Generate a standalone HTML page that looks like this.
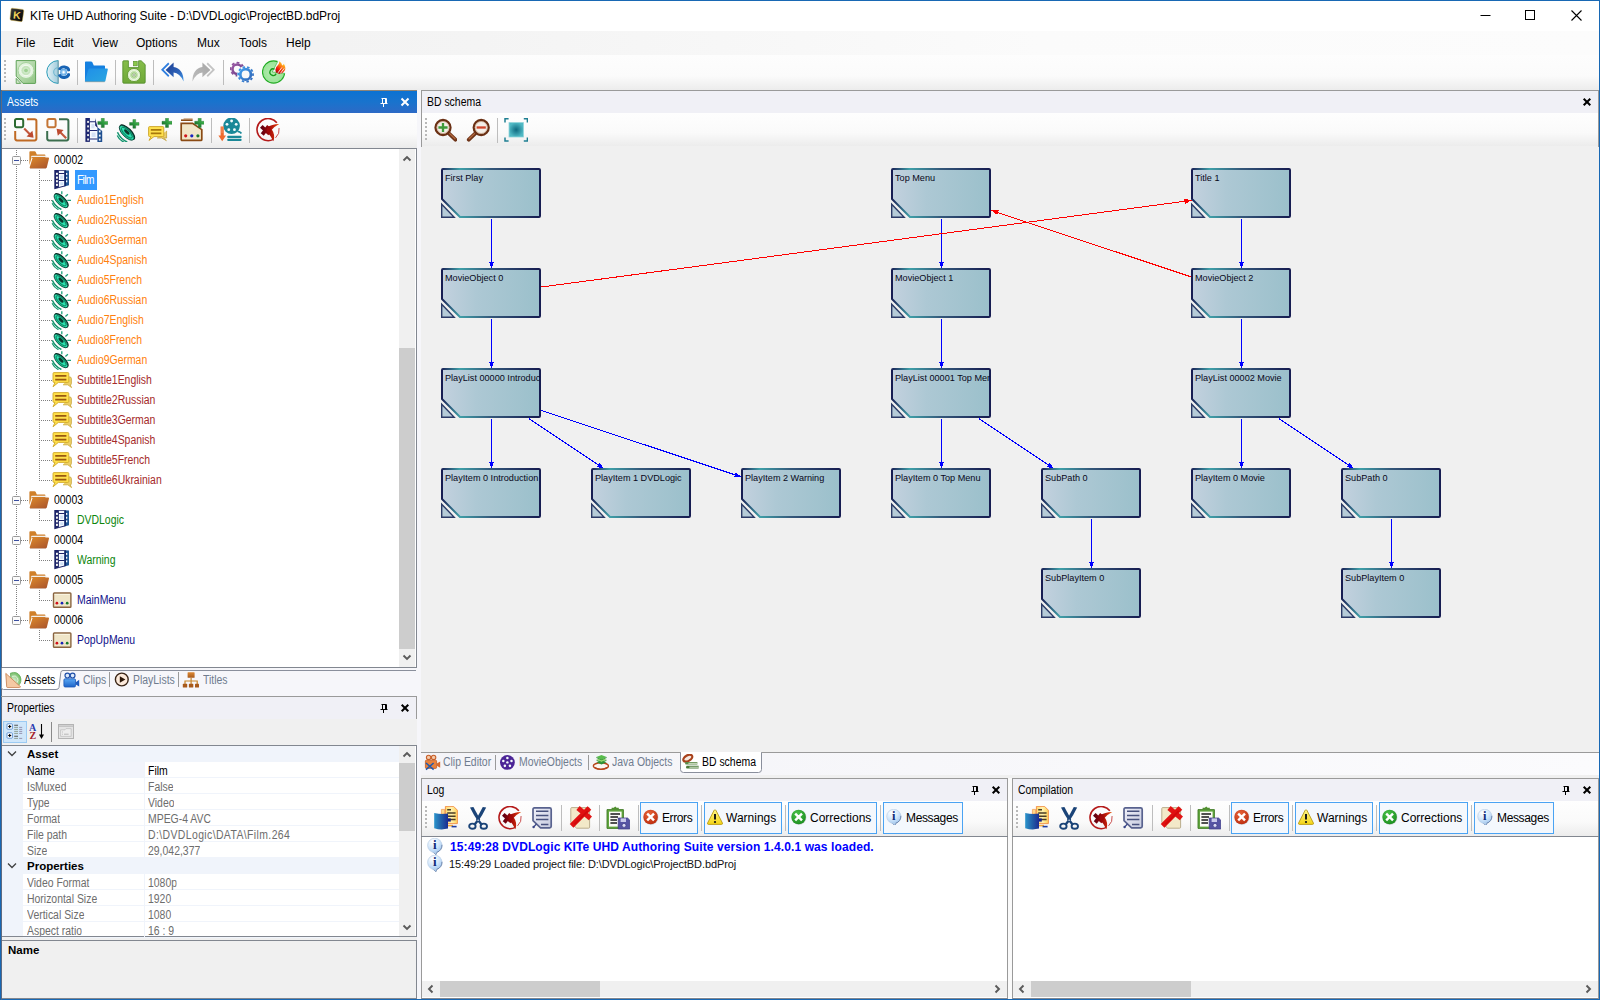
<!DOCTYPE html><html><head><meta charset="utf-8"><title>KITe UHD Authoring Suite</title><style>
*{margin:0;padding:0;box-sizing:border-box}
html,body{width:1600px;height:1000px;overflow:hidden}
body{position:relative;background:#f0f0f0;font-family:"Liberation Sans",sans-serif;font-size:11px;color:#000}
div,span.t,span.s,span.b,svg.i{position:absolute}
span.t,span.s,span.b{white-space:nowrap;line-height:1}
span.t{font-size:12px;transform:scaleX(.87);transform-origin:0 0}
span.s{font-size:12px}
span.b{font-weight:bold}
.sep{width:1px;background:#bdbdbd}
.grip{width:2px;background:repeating-linear-gradient(to bottom,#b8b8b8 0 2px,transparent 2px 4px)}
</style></head><body>
<div style="left:0px;top:0px;width:1600px;height:1000px;background:#1868b4"></div>
<div style="left:1px;top:1px;width:1598px;height:998px;background:#f0f0f0"></div>
<div style="left:1px;top:1px;width:1598px;height:30px;background:#fff"></div>
<svg class="i" style="left:9px;top:7px" width="16" height="16" viewBox="0 0 16 16"><defs><linearGradient id="apg" x1="0" y1="0" x2="1" y2="1"><stop offset="0" stop-color="#3a3a3a"/><stop offset="1" stop-color="#000"/></linearGradient></defs><path d="M3.2 1.2L13.6 2.4Q15 2.7 14.8 4L13.4 13.4Q13.1 14.8 11.7 14.6L2 13.2Q0.8 12.9 1 11.6L2 2.4Q2.2 1.1 3.2 1.2Z" fill="url(#apg)" stroke="#d9b64a" stroke-width="0.5"/><text x="4.1" y="12" font-family="Liberation Sans,sans-serif" font-weight="bold" font-size="10.5" fill="#f4d35a" transform="rotate(6 8 8)">K</text></svg>
<span class="s" style="left:30px;top:10px;letter-spacing:-0.06px">KITe UHD Authoring Suite - D:\DVDLogic\ProjectBD.bdProj</span>
<svg class="i" style="left:1470px;top:5px" width="125" height="22" viewBox="0 0 125 22"><path d="M10.5 10.5h10" stroke="#000" stroke-width="1" fill="none"/><rect x="55.5" y="5.5" width="9" height="9" stroke="#000" stroke-width="1" fill="none"/><path d="M101.5 5.5l10 10M111.5 5.5l-10 10" stroke="#000" stroke-width="1.1" fill="none"/></svg>
<div style="left:1px;top:31px;width:1598px;height:24px;background:linear-gradient(to right,#f1f1f1,#f4f4f4 30%,#fbfbfb 65%,#fcfcfc)"></div>
<span class="s" style="left:16px;top:37px;">File</span>
<span class="s" style="left:53px;top:37px;">Edit</span>
<span class="s" style="left:92px;top:37px;">View</span>
<span class="s" style="left:136px;top:37px;">Options</span>
<span class="s" style="left:197px;top:37px;">Mux</span>
<span class="s" style="left:239px;top:37px;">Tools</span>
<span class="s" style="left:286px;top:37px;">Help</span>
<div style="left:1px;top:55px;width:1598px;height:35px;background:linear-gradient(#fdfdfd,#fbfbfb 60%,#ececec)"></div>
<div class="grip" style="left:4px;top:60px;width:2px;height:22px;"></div>
<svg class="i" style="left:14px;top:60px" width="24" height="24" viewBox="0 0 24 24"><defs><linearGradient id="npg" x1="0" y1="0" x2="1" y2="1"><stop offset="0" stop-color="#d7ecd0"/><stop offset="1" stop-color="#8fc482"/></linearGradient></defs><path d="M2.2 0.6H21Q21.6 0.6 21.6 1.2V22.8Q21.6 23.4 21 23.4H9L2.2 16.2Z" fill="url(#npg)" stroke="#5fa257" stroke-width="1"/><path d="M2.2 18.4L6.8 23.4H2.2Z" fill="#cfe6c8" stroke="#5fa257" stroke-width="0.9"/><circle cx="12" cy="10.5" r="8" fill="#e4f3df" stroke="#a5d39b" stroke-width="1"/><circle cx="12" cy="10.5" r="5.2" fill="#c5e4bc" stroke="#f4fbf2" stroke-width="1"/><circle cx="12" cy="10.5" r="2.4" fill="#9fd192" stroke="#dff0da" stroke-width="0.8"/></svg>
<svg class="i" style="left:46px;top:60px" width="24" height="24" viewBox="0 0 24 24"><defs><linearGradient id="dbg" x1="0" y1="0" x2="1" y2="0"><stop offset="0" stop-color="#e6f3f7"/><stop offset="1" stop-color="#9fcbdc"/></linearGradient><radialGradient id="dbr"><stop offset="0" stop-color="#e8f6ff"/><stop offset="1" stop-color="#4b9ce0"/></radialGradient></defs><path d="M12.2 0.6A11.4 11.4 0 0 0 12.2 23.4Z" fill="url(#dbg)" stroke="#2b9cb8" stroke-width="1"/><path d="M12.2 0.6V23.4" stroke="#9aa6ac" stroke-width="0.8"/><path d="M12 7.8A4.3 4.3 0 0 0 12 16.4" fill="none" stroke="#6fb6cf" stroke-width="1.1"/><path d="M13.20 9.96A5.3 5.3 0 0 1 23.18 11.10M23.18 13.30A5.3 5.3 0 0 1 13.20 14.44" fill="none" stroke="#1763b4" stroke-width="2.9"/><circle cx="17.6" cy="12.2" r="3.4" fill="url(#dbr)"/><circle cx="17.6" cy="12.2" r="1" fill="#fff"/></svg>
<svg class="i" style="left:84px;top:60px" width="24" height="24" viewBox="0 0 24 24"><defs><linearGradient id="fog" x1="0" y1="0" x2="1" y2="1"><stop offset="0" stop-color="#1f8fe9"/><stop offset="1" stop-color="#2aa6e0"/></linearGradient></defs><path d="M1 2.2Q1 1.4 1.8 1.4H7Q7.8 1.4 8.2 2L9.8 5.4H20.2Q21 5.4 21 6.2V12H6L1.6 21.4L1 20Z" fill="#1580e0"/><path d="M4.4 9.4Q4.6 8.6 5.4 8.6H23Q24 8.6 23.8 9.6L21.4 21Q21.2 21.8 20.4 21.8H1.6Q0.6 21.8 0.9 20.8Z" fill="url(#fog)"/><path d="M1.2 21.8H20.6" stroke="#8a6a4a" stroke-width="0.6" opacity="0.6"/></svg>
<svg class="i" style="left:122px;top:60px" width="24" height="24" viewBox="0 0 24 24"><defs><linearGradient id="svg1" x1="0" y1="0" x2="0" y2="1"><stop offset="0" stop-color="#86bd4a"/><stop offset="1" stop-color="#6ea838"/></linearGradient></defs><path d="M1.6 0.8H6.4V7.6H16.6V0.8H19.2L23.2 4.6V22.2Q23.2 23.2 22.2 23.2H1.6Q0.8 23.2 0.8 22.2V1.6Q0.8 0.8 1.6 0.8Z" fill="url(#svg1)" stroke="#4f8a28" stroke-width="0.8"/><rect x="11.6" y="1.4" width="3.6" height="4.4" fill="#8cc84a" stroke="#5a932c" stroke-width="0.7"/><circle cx="12" cy="15" r="6.6" fill="#dff0d0" stroke="#5a932c" stroke-width="0.8"/><circle cx="12" cy="15" r="4.4" fill="#bfe0a8" stroke="#f2faea" stroke-width="0.8"/><circle cx="12" cy="15" r="2" fill="#f4faef" stroke="#7db05a" stroke-width="0.7"/><circle cx="12" cy="15" r="0.7" fill="#4a5a3a"/></svg>
<svg class="i" style="left:160px;top:60px" width="24" height="24" viewBox="0 0 24 24"><defs><linearGradient id="ung" x1="0" y1="0" x2="1" y2="1"><stop offset="0" stop-color="#1c3d90"/><stop offset="0.6" stop-color="#2e62b8"/><stop offset="1" stop-color="#3f97e8"/></linearGradient></defs><path d="M8.2 2.6L1 9.8L8.2 17L9.4 15.6L3.6 9.8L9.4 4Z" fill="#2f7fe0"/><path d="M13.6 2.4L5.6 10L13.6 17.2V12.6Q19.6 13.2 23.6 21.4Q23.4 8.6 13.6 7Z" fill="url(#ung)"/></svg>
<svg class="i" style="left:192px;top:60px" width="24" height="24" viewBox="0 0 24 24"><defs><linearGradient id="reg" x1="0" y1="0" x2="1" y2="1"><stop offset="0" stop-color="#a6a6a6"/><stop offset="1" stop-color="#bdbdbd"/></linearGradient></defs><g transform="translate(24 0) scale(-1 1)"><path d="M8.2 2.6L1 9.8L8.2 17L9.4 15.6L3.6 9.8L9.4 4Z" fill="#c4c4c4"/><path d="M13.6 2.4L5.6 10L13.6 17.2V12.6Q19.6 13.2 23.6 21.4Q23.4 8.6 13.6 7Z" fill="url(#reg)"/></g></svg>
<svg class="i" style="left:230px;top:60px" width="24" height="24" viewBox="0 0 24 24"><defs><linearGradient id="gpg" x1="0" y1="0" x2="1" y2="1"><stop offset="0" stop-color="#9a58a4"/><stop offset="1" stop-color="#6a3f86"/></linearGradient><linearGradient id="gbg" x1="0" y1="0" x2="1" y2="1"><stop offset="0" stop-color="#3f9cec"/><stop offset="1" stop-color="#3268b8"/></linearGradient></defs><circle cx="7.2" cy="9.2" r="4.7" fill="none" stroke="url(#gpg)" stroke-width="2.5"/><circle cx="7.2" cy="9.2" r="6.5" fill="none" stroke="url(#gpg)" stroke-width="1.7" stroke-dasharray="2.757 2.348" transform="rotate(-12 7.2 9.2)"/><circle cx="15.6" cy="14.4" r="8.7" fill="#f9f9f9"/><circle cx="15.6" cy="14.4" r="5.3" fill="none" stroke="url(#gbg)" stroke-width="2.7"/><circle cx="15.6" cy="14.4" r="7.4" fill="none" stroke="url(#gbg)" stroke-width="1.8" stroke-dasharray="2.511 2.139" transform="rotate(-8 15.6 14.4)"/></svg>
<svg class="i" style="left:262px;top:60px" width="24" height="24" viewBox="0 0 24 24"><defs><radialGradient id="bug" cx="0.45" cy="0.5" r="0.6"><stop offset="0" stop-color="#b4ecb0"/><stop offset="1" stop-color="#94e292"/></radialGradient><linearGradient id="flg" x1="0.1" y1="1" x2="0.7" y2="0"><stop offset="0" stop-color="#8a0a06"/><stop offset="0.35" stop-color="#f01a10"/><stop offset="0.7" stop-color="#ff8a14"/><stop offset="1" stop-color="#ffe43a"/></linearGradient></defs><circle cx="11.6" cy="12" r="11.1" fill="url(#bug)" stroke="#22ac24" stroke-width="1.1"/><path d="M10.2 12L16.6 -0.6L24.4 -0.6V13.6Z" fill="#f9f9f9"/><path d="M10.2 12L15.7 1.6M10.2 12L22.7 13.3" stroke="#3cb83c" stroke-width="0.7" fill="none"/><path d="M14.2 13.6A3.3 3.3 0 1 1 12.6 9.2" fill="none" stroke="#179a1a" stroke-width="1.3"/><path d="M14 12.4Q12.2 8.2 15.8 5.2Q17.6 3.6 17.2 1.2Q19.8 2.8 20.2 5.4Q21.6 5 21.8 3.8Q24.6 8 22.4 11Q20.6 13.6 17.4 14Z" fill="url(#flg)"/><path d="M16 12.8L20 7.4M18.4 13.4L22.2 8.4" stroke="#efe4dc" stroke-width="1"/></svg>
<div class="sep" style="left:77px;top:60px;width:1px;height:25px;"></div>
<div class="sep" style="left:115px;top:60px;width:1px;height:25px;"></div>
<div class="sep" style="left:153px;top:60px;width:1px;height:25px;"></div>
<div class="sep" style="left:223px;top:60px;width:1px;height:25px;"></div>
<div style="left:1px;top:90px;width:416px;height:1px;background:#8c8478"></div>
<div style="left:1px;top:90px;width:1px;height:910px;background:#5e6a80"></div>
<div style="left:2px;top:91px;width:415px;height:22px;background:linear-gradient(#0b72d2,#1973cd 50%,#2d6ac6)"></div>
<span class="t" style="left:7px;top:96px;color:#fff;">Assets</span>
<svg class="i" style="left:379px;top:96px" width="10" height="12" viewBox="0 0 10 12"><path d="M2.5 2.5h5M3.5 2.5v4.5M6.5 2.5v4.5M7.5 2.5v4.5M1.5 7.5h7M4.5 8v3" stroke="#fff" stroke-width="1" fill="none"/></svg>
<svg class="i" style="left:400px;top:97px" width="10" height="10" viewBox="0 0 10 10"><path d="M1.5 1.5l7 7M8.5 1.5l-7 7" stroke="#fff" stroke-width="2" fill="none"/></svg>
<div style="left:2px;top:113px;width:415px;height:35px;background:linear-gradient(#fefefe,#fafafa 60%,#ebebeb)"></div>
<div class="grip" style="left:4px;top:118px;width:2px;height:22px;"></div>
<svg class="i" style="left:14px;top:118px" width="24" height="24" viewBox="0 0 24 24"><rect x="1" y="1" width="8.2" height="8.2" rx="1.4" fill="none" stroke="#2c6a30" stroke-width="2"/><path d="M13 1.3H20.6Q22.4 1.3 22.4 3.1V20.6Q22.4 22.4 20.6 22.4H3Q1.2 22.4 1.2 20.6V13" fill="none" stroke="#c06a24" stroke-width="2"/><path d="M10.2 10.6L16.6 17" stroke="#c2573c" stroke-width="2.1"/><path d="M19.6 19.8L12.6 18.6L18.4 12.8Z" fill="#bd4a30"/></svg>
<svg class="i" style="left:46px;top:118px" width="24" height="24" viewBox="0 0 24 24"><rect x="1.4" y="1" width="8.2" height="8.2" rx="1.4" fill="none" stroke="#c47434" stroke-width="2"/><path d="M13 1.3H20.6Q22.4 1.3 22.4 3.1V20.6Q22.4 22.4 20.6 22.4H3Q1.2 22.4 1.2 20.6V13" fill="none" stroke="#3b6e4e" stroke-width="2"/><path d="M20.2 20.2L14 14" stroke="#c2573c" stroke-width="2.1"/><path d="M10.6 10.8L17.6 12L11.8 17.8Z" fill="#bd4a30"/></svg>
<svg class="i" style="left:84px;top:118px" width="24" height="24" viewBox="0 0 24 24"><path d="M5.9 0H11.1V7.4L13.4 9.6V23.9H5.9Z" fill="#f6f9fe"/><path d="M1.4 0H5.9V23.9H1.4Z" fill="#1d2670"/><path d="M11.1 7.2L18.2 13V23.9H13.4V9.6Z" fill="#1f4f90"/><path d="M11.1 0V7.4L13.4 9.8V8.2Z" fill="#1d2670"/><path d="M5.9 3.3H11.1V4.2H5.9ZM5.9 12H13.4V13H5.9ZM5.9 20.5H13.4V21.4H5.9Z" fill="#1d2670"/><rect x="7.4" y="6" width="3" height="4.2" fill="#d5e2f6"/><rect x="7.6" y="14.6" width="4" height="4.4" fill="#d5e2f6"/><rect x="3.2" y="2.9" width="1.7" height="2" fill="#fbfbf6"/><rect x="3.2" y="7.4" width="1.7" height="2" fill="#fbfbf6"/><rect x="3.2" y="11.7" width="1.7" height="2" fill="#fbfbf6"/><rect x="3.2" y="16.1" width="1.7" height="2" fill="#fbfbf6"/><rect x="3.2" y="20.5" width="1.7" height="2" fill="#fbfbf6"/><rect x="14.9" y="12.4" width="1.7" height="2" fill="#f6f8fb"/><rect x="14.9" y="16.6" width="1.7" height="2" fill="#f6f8fb"/><rect x="14.9" y="20.6" width="1.7" height="2" fill="#f6f8fb"/><defs><linearGradient id="plg1" x1="0" y1="1" x2="1" y2="0"><stop offset="0" stop-color="#14602a"/><stop offset="0.55" stop-color="#2f9e40"/><stop offset="1" stop-color="#5cc85a"/></linearGradient></defs><path d="M13.8 3.4000000000000004H17.3V0.2999999999999998H20.3V3.4000000000000004H23.8V6.4H20.3V9.5H17.3V6.4H13.8Z" fill="url(#plg1)" stroke="#1f6e2e" stroke-width="0.4"/></svg>
<svg class="i" style="left:116px;top:118px" width="24" height="24" viewBox="0 0 24 24"><defs><linearGradient id="spg" x1="0" y1="0" x2="1" y2="0"><stop offset="0" stop-color="#10b88c"/><stop offset="0.5" stop-color="#2ee6b2"/><stop offset="1" stop-color="#10a07a"/></linearGradient></defs><g transform="rotate(-45 11 14.5)"><path d="M4.4 7.6Q1.8 14.5 4.4 21.4" fill="none" stroke="#12946e" stroke-width="1.5"/><path d="M2 9.6Q0.2 14.5 2 19.4" fill="none" stroke="#12946e" stroke-width="1.2"/><ellipse cx="11.4" cy="14.5" rx="4.4" ry="10.2" fill="#07241e"/><ellipse cx="10.6" cy="14.5" rx="4.2" ry="9.6" fill="url(#spg)" stroke="#0a3a30" stroke-width="0.8"/><ellipse cx="10.8" cy="14.5" rx="2.7" ry="7.2" fill="none" stroke="#0b5a46" stroke-width="0.7"/><ellipse cx="11.2" cy="14" rx="1.5" ry="3.4" fill="#0a3c30"/></g><defs><linearGradient id="plg2" x1="0" y1="1" x2="1" y2="0"><stop offset="0" stop-color="#14602a"/><stop offset="0.55" stop-color="#2f9e40"/><stop offset="1" stop-color="#5cc85a"/></linearGradient></defs><path d="M13.600000000000001 4.5H16.900000000000002V1.5759999999999996H19.7V4.5H23.0V7.300000000000001H19.7V10.224H16.900000000000002V7.300000000000001H13.600000000000001Z" fill="url(#plg2)" stroke="#1f6e2e" stroke-width="0.4"/></svg>
<svg class="i" style="left:148px;top:118px" width="24" height="24" viewBox="0 0 24 24"><path d="M18.6 12.8V20H15.6L18.4 22.6L13.6 20H9" fill="#e9cc6a" stroke="#c2a13a" stroke-width="0.8"/><path d="M1.6 8.6H14.8Q15.8 8.6 15.8 9.6V17.6Q15.8 18.6 14.8 18.6H6L1 22.4L3 18.6H1.6Q0.6 18.6 0.6 17.6V9.6Q0.6 8.6 1.6 8.6Z" fill="#ffe14d" stroke="#c9a227" stroke-width="0.9"/><path d="M2.8 11.8H13.4M2.8 15.4H13.4" stroke="#a8790c" stroke-width="1.7"/><defs><linearGradient id="plg3" x1="0" y1="1" x2="1" y2="0"><stop offset="0" stop-color="#14602a"/><stop offset="0.55" stop-color="#2f9e40"/><stop offset="1" stop-color="#5cc85a"/></linearGradient></defs><path d="M14 3.3H17.5V0.1999999999999993H20.5V3.3H24V6.3H20.5V9.4H17.5V6.3H14Z" fill="url(#plg3)" stroke="#1f6e2e" stroke-width="0.4"/></svg>
<svg class="i" style="left:180px;top:118px" width="24" height="24" viewBox="0 0 24 24"><path d="M1 2.2H12.6" stroke="#8a4a14" stroke-width="1.6"/><path d="M3.6 1H12.6" stroke="#a86a30" stroke-width="0.9"/><path d="M1.2 5.4H12.6L21.8 11.6V21.4Q21.8 22.4 20.8 22.4H2.2Q1.2 22.4 1.2 21.4Z" fill="#f1e6c8" stroke="#8a4a14" stroke-width="1.7"/><circle cx="5.7" cy="17.8" r="1.6" fill="#d0181e"/><circle cx="11.8" cy="17.8" r="1.6" fill="#1a24c0"/><circle cx="17.9" cy="17.8" r="1.6" fill="#1d7a2e"/><defs><linearGradient id="plg4" x1="0" y1="1" x2="1" y2="0"><stop offset="0" stop-color="#14602a"/><stop offset="0.55" stop-color="#2f9e40"/><stop offset="1" stop-color="#5cc85a"/></linearGradient></defs><path d="M14.7 3.3H18.2V0.1999999999999993H21.2V3.3H24.7V6.3H21.2V9.4H18.2V6.3H14.7Z" fill="url(#plg4)" stroke="#1f6e2e" stroke-width="0.4"/></svg>
<svg class="i" style="left:218px;top:118px" width="24" height="24" viewBox="0 0 24 24"><circle cx="13.6" cy="7.8" r="8.3" fill="#1a8898"/><circle cx="13.60" cy="2.99" r="1.41" fill="#f4fbfc"/><circle cx="18.18" cy="6.31" r="1.41" fill="#f4fbfc"/><circle cx="16.43" cy="11.69" r="1.41" fill="#f4fbfc"/><circle cx="10.77" cy="11.69" r="1.41" fill="#f4fbfc"/><circle cx="9.02" cy="6.31" r="1.41" fill="#f4fbfc"/><path d="M19.6 13.4Q22 13.6 23.4 15.4" stroke="#1a8898" stroke-width="1.6" fill="none"/><rect x="9.2" y="17.8" width="14.4" height="2.2" rx="1" fill="#1a8898"/><rect x="9.2" y="20.8" width="14.4" height="2.2" rx="1" fill="#1a8898"/><path d="M2.6 8.6H5.8V17.4H8L4.2 23.2L0.4 17.4H2.6Z" fill="#ef6a2e"/><path d="M2.6 10h3.2M2.6 12h3.2M2.6 14h3.2" stroke="#f7b08c" stroke-width="0.6"/></svg>
<svg class="i" style="left:256px;top:118px" width="24" height="24" viewBox="0 0 24 24"><defs><linearGradient id="plga" gradientUnits="userSpaceOnUse" x1="5" y1="0" x2="23" y2="0"><stop offset="0" stop-color="#5c0012"/><stop offset="0.45" stop-color="#a00808"/><stop offset="0.8" stop-color="#d02c0c"/><stop offset="1" stop-color="#e8600c"/></linearGradient></defs><path d="M17.31 21.40A11.1 11.1 0 1 1 20.85 4.77" fill="none" stroke="#b41a1a" stroke-width="1.6"/><path d="M23.09 10.06A11.1 11.1 0 0 1 19.53 19.85" fill="none" stroke="#c43a3a" stroke-width="0.9"/><path fill="url(#plga)" d="M6.56 6.91L14.88 14.40L12.34 17.23L4.02 9.73Z"/><path fill="url(#plga)" d="M4.78 15.29L11.18 7.09L14.18 9.43L7.77 17.63Z"/><path fill="url(#plga)" d="M10.6 9.6Q16.6 5.8 23.2 6Q17.8 8.6 14 13.6Z"/><path fill="url(#plga)" d="M11.6 14.6Q15 18.2 17.4 23.2Q19.8 17 15.2 10.4Z"/><circle cx="12.8" cy="12" r="2.2" fill="#a00a0a"/></svg>
<div class="sep" style="left:77px;top:118px;width:1px;height:25px;"></div>
<div class="sep" style="left:211px;top:118px;width:1px;height:25px;"></div>
<div class="sep" style="left:249px;top:118px;width:1px;height:25px;"></div>
<div style="left:2px;top:148px;width:415px;height:520px;background:#fff;border:1px solid #828790;border-left:0"></div>
<div style="left:399px;top:149px;width:16px;height:518px;background:#f0f0f0"></div>
<div style="left:399px;top:348px;width:16px;height:301px;background:#cdcdcd"></div>
<svg class="i" style="left:399px;top:150px" width="16" height="17" viewBox="0 0 16 17"><path d="M4.5 10.5L8 7l3.5 3.5" stroke="#5a5a5a" stroke-width="1.9" fill="none"/></svg>
<svg class="i" style="left:399px;top:649px" width="16" height="17" viewBox="0 0 16 17"><path d="M4.5 6.5L8 10l3.5 -3.5" stroke="#5a5a5a" stroke-width="1.9" fill="none"/></svg>
<div style="left:16px;top:150px;width:1px;height:471px;background:repeating-linear-gradient(to bottom,#808080 0 1px,transparent 1px 2px)"></div>
<div style="left:39px;top:170px;width:1px;height:311px;background:repeating-linear-gradient(to bottom,#808080 0 1px,transparent 1px 2px)"></div>
<div style="left:39px;top:510px;width:1px;height:11px;background:repeating-linear-gradient(to bottom,#808080 0 1px,transparent 1px 2px)"></div>
<div style="left:39px;top:550px;width:1px;height:11px;background:repeating-linear-gradient(to bottom,#808080 0 1px,transparent 1px 2px)"></div>
<div style="left:39px;top:590px;width:1px;height:11px;background:repeating-linear-gradient(to bottom,#808080 0 1px,transparent 1px 2px)"></div>
<div style="left:39px;top:630px;width:1px;height:11px;background:repeating-linear-gradient(to bottom,#808080 0 1px,transparent 1px 2px)"></div>
<div style="left:21px;top:160px;width:8px;height:1px;background:repeating-linear-gradient(to right,#808080 0 1px,transparent 1px 2px)"></div>
<svg class="i" style="left:12px;top:156px" width="9" height="9" viewBox="0 0 9 9"><rect x="0.5" y="0.5" width="8" height="8" rx="1" fill="#fafafa" stroke="#9a9a9a"/><path d="M2 4.5h5" stroke="#3a4ea0" stroke-width="1"/></svg>
<svg class="i" style="left:28px;top:150px" width="22" height="20" viewBox="0 0 22 20"><defs><linearGradient id="tfg" x1="0" y1="0" x2="1" y2="1"><stop offset="0" stop-color="#dc8a2c"/><stop offset="1" stop-color="#a8522c"/></linearGradient></defs><path d="M1.4 2Q1.4 1.2 2.2 1.2H6.6Q7.4 1.2 7.7 1.9L8.8 4.6H16.6Q17.4 4.6 17.4 5.4V8H3.4L1.4 15Z" fill="#d0802a"/><path d="M3.2 7.4L4 6.4H18.4" stroke="#f2f0ee" stroke-width="1.2" fill="none"/><path d="M4.4 8.4Q4.6 7.6 5.4 7.6H20.2Q21.2 7.6 21 8.6L18.8 17.4Q18.6 18.2 17.8 18.2H2.4Q1.4 18.2 1.7 17.2Z" fill="url(#tfg)"/><path d="M2 18.3H18" stroke="#8a4a2a" stroke-width="0.5" opacity="0.7"/></svg>
<span class="t" style="left:54px;top:154px;">00002</span>
<div style="left:41px;top:180px;width:12px;height:1px;background:repeating-linear-gradient(to right,#808080 0 1px,transparent 1px 2px)"></div>
<svg class="i" style="left:51px;top:170px" width="22" height="20" viewBox="0 0 22 20"><path d="M7.6 0.4H13.8V15.8L7.6 17.8Z" fill="#f4f8fe"/><path d="M3.3 0H7.9V18L3.3 19.2Z" fill="#1c2468"/><path d="M13.4 0.2L18 0.5V15.2L13.4 16.4Z" fill="#1f5596"/><path d="M13.4 0.2H14.8V16L13.4 16.4Z" fill="#0c1c5c"/><path d="M7.9 0.3H13.6V0.9H7.9ZM7.9 3.1H13.6V4H7.9ZM7.9 10H13.6V11H7.9ZM7.9 17L13.6 15.4V16.4L7.9 18Z" fill="#1c2468"/><rect x="9.2" y="5.6" width="3" height="3.2" fill="#cfe0f6"/><rect x="9.2" y="12.4" width="3" height="2.6" fill="#cfe0f6"/><rect x="5" y="2.8" width="1.9" height="2.1" fill="#fbfbf6"/><rect x="5" y="6.6" width="1.9" height="2.1" fill="#fbfbf6"/><rect x="5" y="10.2" width="1.9" height="2.1" fill="#fbfbf6"/><rect x="5" y="13.8" width="1.9" height="2.1" fill="#fbfbf6"/><rect x="15" y="3" width="1.3" height="1.9" fill="#f6f8fb"/><rect x="15" y="6.8" width="1.3" height="1.9" fill="#f6f8fb"/><rect x="15" y="10.4" width="1.3" height="1.9" fill="#f6f8fb"/></svg>
<div style="left:75px;top:170px;width:22px;height:20px;background:#3399ff"></div>
<span class="t" style="left:77px;top:174px;color:#fff;letter-spacing:-0.9px">Film</span>
<div style="left:41px;top:200px;width:12px;height:1px;background:repeating-linear-gradient(to right,#808080 0 1px,transparent 1px 2px)"></div>
<svg class="i" style="left:51px;top:190px" width="22" height="20" viewBox="0 0 22 20"><g transform="translate(10.2 10.6) scale(0.93) translate(-11 -14.5)"><defs><linearGradient id="spg2" x1="0" y1="0" x2="1" y2="0"><stop offset="0" stop-color="#10b88c"/><stop offset="0.5" stop-color="#2ee6b2"/><stop offset="1" stop-color="#10a07a"/></linearGradient></defs><g transform="rotate(-45 11 14.5)"><path d="M4.4 7.6Q1.8 14.5 4.4 21.4" fill="none" stroke="#12946e" stroke-width="1.5"/><path d="M2 9.6Q0.2 14.5 2 19.4" fill="none" stroke="#12946e" stroke-width="1.2"/><ellipse cx="11.4" cy="14.5" rx="4.4" ry="10.2" fill="#07241e"/><ellipse cx="10.6" cy="14.5" rx="4.2" ry="9.6" fill="url(#spg2)" stroke="#0a3a30" stroke-width="0.8"/><ellipse cx="10.8" cy="14.5" rx="2.7" ry="7.2" fill="none" stroke="#0b5a46" stroke-width="0.7"/><ellipse cx="11.2" cy="14" rx="1.5" ry="3.4" fill="#0a3c30"/></g></g><path d="M10.8 1.2V4.2M14.4 6.5L16.9 4.3M16.3 10.3H20" stroke="#1aa27c" stroke-width="1.3" fill="none"/></svg>
<span class="t" style="left:77px;top:194px;color:#ff7f0e;">Audio1English</span>
<div style="left:41px;top:220px;width:12px;height:1px;background:repeating-linear-gradient(to right,#808080 0 1px,transparent 1px 2px)"></div>
<svg class="i" style="left:51px;top:210px" width="22" height="20" viewBox="0 0 22 20"><g transform="translate(10.2 10.6) scale(0.93) translate(-11 -14.5)"><defs><linearGradient id="spg2" x1="0" y1="0" x2="1" y2="0"><stop offset="0" stop-color="#10b88c"/><stop offset="0.5" stop-color="#2ee6b2"/><stop offset="1" stop-color="#10a07a"/></linearGradient></defs><g transform="rotate(-45 11 14.5)"><path d="M4.4 7.6Q1.8 14.5 4.4 21.4" fill="none" stroke="#12946e" stroke-width="1.5"/><path d="M2 9.6Q0.2 14.5 2 19.4" fill="none" stroke="#12946e" stroke-width="1.2"/><ellipse cx="11.4" cy="14.5" rx="4.4" ry="10.2" fill="#07241e"/><ellipse cx="10.6" cy="14.5" rx="4.2" ry="9.6" fill="url(#spg2)" stroke="#0a3a30" stroke-width="0.8"/><ellipse cx="10.8" cy="14.5" rx="2.7" ry="7.2" fill="none" stroke="#0b5a46" stroke-width="0.7"/><ellipse cx="11.2" cy="14" rx="1.5" ry="3.4" fill="#0a3c30"/></g></g><path d="M10.8 1.2V4.2M14.4 6.5L16.9 4.3M16.3 10.3H20" stroke="#1aa27c" stroke-width="1.3" fill="none"/></svg>
<span class="t" style="left:77px;top:214px;color:#ff7f0e;">Audio2Russian</span>
<div style="left:41px;top:240px;width:12px;height:1px;background:repeating-linear-gradient(to right,#808080 0 1px,transparent 1px 2px)"></div>
<svg class="i" style="left:51px;top:230px" width="22" height="20" viewBox="0 0 22 20"><g transform="translate(10.2 10.6) scale(0.93) translate(-11 -14.5)"><defs><linearGradient id="spg2" x1="0" y1="0" x2="1" y2="0"><stop offset="0" stop-color="#10b88c"/><stop offset="0.5" stop-color="#2ee6b2"/><stop offset="1" stop-color="#10a07a"/></linearGradient></defs><g transform="rotate(-45 11 14.5)"><path d="M4.4 7.6Q1.8 14.5 4.4 21.4" fill="none" stroke="#12946e" stroke-width="1.5"/><path d="M2 9.6Q0.2 14.5 2 19.4" fill="none" stroke="#12946e" stroke-width="1.2"/><ellipse cx="11.4" cy="14.5" rx="4.4" ry="10.2" fill="#07241e"/><ellipse cx="10.6" cy="14.5" rx="4.2" ry="9.6" fill="url(#spg2)" stroke="#0a3a30" stroke-width="0.8"/><ellipse cx="10.8" cy="14.5" rx="2.7" ry="7.2" fill="none" stroke="#0b5a46" stroke-width="0.7"/><ellipse cx="11.2" cy="14" rx="1.5" ry="3.4" fill="#0a3c30"/></g></g><path d="M10.8 1.2V4.2M14.4 6.5L16.9 4.3M16.3 10.3H20" stroke="#1aa27c" stroke-width="1.3" fill="none"/></svg>
<span class="t" style="left:77px;top:234px;color:#ff7f0e;">Audio3German</span>
<div style="left:41px;top:260px;width:12px;height:1px;background:repeating-linear-gradient(to right,#808080 0 1px,transparent 1px 2px)"></div>
<svg class="i" style="left:51px;top:250px" width="22" height="20" viewBox="0 0 22 20"><g transform="translate(10.2 10.6) scale(0.93) translate(-11 -14.5)"><defs><linearGradient id="spg2" x1="0" y1="0" x2="1" y2="0"><stop offset="0" stop-color="#10b88c"/><stop offset="0.5" stop-color="#2ee6b2"/><stop offset="1" stop-color="#10a07a"/></linearGradient></defs><g transform="rotate(-45 11 14.5)"><path d="M4.4 7.6Q1.8 14.5 4.4 21.4" fill="none" stroke="#12946e" stroke-width="1.5"/><path d="M2 9.6Q0.2 14.5 2 19.4" fill="none" stroke="#12946e" stroke-width="1.2"/><ellipse cx="11.4" cy="14.5" rx="4.4" ry="10.2" fill="#07241e"/><ellipse cx="10.6" cy="14.5" rx="4.2" ry="9.6" fill="url(#spg2)" stroke="#0a3a30" stroke-width="0.8"/><ellipse cx="10.8" cy="14.5" rx="2.7" ry="7.2" fill="none" stroke="#0b5a46" stroke-width="0.7"/><ellipse cx="11.2" cy="14" rx="1.5" ry="3.4" fill="#0a3c30"/></g></g><path d="M10.8 1.2V4.2M14.4 6.5L16.9 4.3M16.3 10.3H20" stroke="#1aa27c" stroke-width="1.3" fill="none"/></svg>
<span class="t" style="left:77px;top:254px;color:#ff7f0e;">Audio4Spanish</span>
<div style="left:41px;top:280px;width:12px;height:1px;background:repeating-linear-gradient(to right,#808080 0 1px,transparent 1px 2px)"></div>
<svg class="i" style="left:51px;top:270px" width="22" height="20" viewBox="0 0 22 20"><g transform="translate(10.2 10.6) scale(0.93) translate(-11 -14.5)"><defs><linearGradient id="spg2" x1="0" y1="0" x2="1" y2="0"><stop offset="0" stop-color="#10b88c"/><stop offset="0.5" stop-color="#2ee6b2"/><stop offset="1" stop-color="#10a07a"/></linearGradient></defs><g transform="rotate(-45 11 14.5)"><path d="M4.4 7.6Q1.8 14.5 4.4 21.4" fill="none" stroke="#12946e" stroke-width="1.5"/><path d="M2 9.6Q0.2 14.5 2 19.4" fill="none" stroke="#12946e" stroke-width="1.2"/><ellipse cx="11.4" cy="14.5" rx="4.4" ry="10.2" fill="#07241e"/><ellipse cx="10.6" cy="14.5" rx="4.2" ry="9.6" fill="url(#spg2)" stroke="#0a3a30" stroke-width="0.8"/><ellipse cx="10.8" cy="14.5" rx="2.7" ry="7.2" fill="none" stroke="#0b5a46" stroke-width="0.7"/><ellipse cx="11.2" cy="14" rx="1.5" ry="3.4" fill="#0a3c30"/></g></g><path d="M10.8 1.2V4.2M14.4 6.5L16.9 4.3M16.3 10.3H20" stroke="#1aa27c" stroke-width="1.3" fill="none"/></svg>
<span class="t" style="left:77px;top:274px;color:#ff7f0e;">Audio5French</span>
<div style="left:41px;top:300px;width:12px;height:1px;background:repeating-linear-gradient(to right,#808080 0 1px,transparent 1px 2px)"></div>
<svg class="i" style="left:51px;top:290px" width="22" height="20" viewBox="0 0 22 20"><g transform="translate(10.2 10.6) scale(0.93) translate(-11 -14.5)"><defs><linearGradient id="spg2" x1="0" y1="0" x2="1" y2="0"><stop offset="0" stop-color="#10b88c"/><stop offset="0.5" stop-color="#2ee6b2"/><stop offset="1" stop-color="#10a07a"/></linearGradient></defs><g transform="rotate(-45 11 14.5)"><path d="M4.4 7.6Q1.8 14.5 4.4 21.4" fill="none" stroke="#12946e" stroke-width="1.5"/><path d="M2 9.6Q0.2 14.5 2 19.4" fill="none" stroke="#12946e" stroke-width="1.2"/><ellipse cx="11.4" cy="14.5" rx="4.4" ry="10.2" fill="#07241e"/><ellipse cx="10.6" cy="14.5" rx="4.2" ry="9.6" fill="url(#spg2)" stroke="#0a3a30" stroke-width="0.8"/><ellipse cx="10.8" cy="14.5" rx="2.7" ry="7.2" fill="none" stroke="#0b5a46" stroke-width="0.7"/><ellipse cx="11.2" cy="14" rx="1.5" ry="3.4" fill="#0a3c30"/></g></g><path d="M10.8 1.2V4.2M14.4 6.5L16.9 4.3M16.3 10.3H20" stroke="#1aa27c" stroke-width="1.3" fill="none"/></svg>
<span class="t" style="left:77px;top:294px;color:#ff7f0e;">Audio6Russian</span>
<div style="left:41px;top:320px;width:12px;height:1px;background:repeating-linear-gradient(to right,#808080 0 1px,transparent 1px 2px)"></div>
<svg class="i" style="left:51px;top:310px" width="22" height="20" viewBox="0 0 22 20"><g transform="translate(10.2 10.6) scale(0.93) translate(-11 -14.5)"><defs><linearGradient id="spg2" x1="0" y1="0" x2="1" y2="0"><stop offset="0" stop-color="#10b88c"/><stop offset="0.5" stop-color="#2ee6b2"/><stop offset="1" stop-color="#10a07a"/></linearGradient></defs><g transform="rotate(-45 11 14.5)"><path d="M4.4 7.6Q1.8 14.5 4.4 21.4" fill="none" stroke="#12946e" stroke-width="1.5"/><path d="M2 9.6Q0.2 14.5 2 19.4" fill="none" stroke="#12946e" stroke-width="1.2"/><ellipse cx="11.4" cy="14.5" rx="4.4" ry="10.2" fill="#07241e"/><ellipse cx="10.6" cy="14.5" rx="4.2" ry="9.6" fill="url(#spg2)" stroke="#0a3a30" stroke-width="0.8"/><ellipse cx="10.8" cy="14.5" rx="2.7" ry="7.2" fill="none" stroke="#0b5a46" stroke-width="0.7"/><ellipse cx="11.2" cy="14" rx="1.5" ry="3.4" fill="#0a3c30"/></g></g><path d="M10.8 1.2V4.2M14.4 6.5L16.9 4.3M16.3 10.3H20" stroke="#1aa27c" stroke-width="1.3" fill="none"/></svg>
<span class="t" style="left:77px;top:314px;color:#ff7f0e;">Audio7English</span>
<div style="left:41px;top:340px;width:12px;height:1px;background:repeating-linear-gradient(to right,#808080 0 1px,transparent 1px 2px)"></div>
<svg class="i" style="left:51px;top:330px" width="22" height="20" viewBox="0 0 22 20"><g transform="translate(10.2 10.6) scale(0.93) translate(-11 -14.5)"><defs><linearGradient id="spg2" x1="0" y1="0" x2="1" y2="0"><stop offset="0" stop-color="#10b88c"/><stop offset="0.5" stop-color="#2ee6b2"/><stop offset="1" stop-color="#10a07a"/></linearGradient></defs><g transform="rotate(-45 11 14.5)"><path d="M4.4 7.6Q1.8 14.5 4.4 21.4" fill="none" stroke="#12946e" stroke-width="1.5"/><path d="M2 9.6Q0.2 14.5 2 19.4" fill="none" stroke="#12946e" stroke-width="1.2"/><ellipse cx="11.4" cy="14.5" rx="4.4" ry="10.2" fill="#07241e"/><ellipse cx="10.6" cy="14.5" rx="4.2" ry="9.6" fill="url(#spg2)" stroke="#0a3a30" stroke-width="0.8"/><ellipse cx="10.8" cy="14.5" rx="2.7" ry="7.2" fill="none" stroke="#0b5a46" stroke-width="0.7"/><ellipse cx="11.2" cy="14" rx="1.5" ry="3.4" fill="#0a3c30"/></g></g><path d="M10.8 1.2V4.2M14.4 6.5L16.9 4.3M16.3 10.3H20" stroke="#1aa27c" stroke-width="1.3" fill="none"/></svg>
<span class="t" style="left:77px;top:334px;color:#ff7f0e;">Audio8French</span>
<div style="left:41px;top:360px;width:12px;height:1px;background:repeating-linear-gradient(to right,#808080 0 1px,transparent 1px 2px)"></div>
<svg class="i" style="left:51px;top:350px" width="22" height="20" viewBox="0 0 22 20"><g transform="translate(10.2 10.6) scale(0.93) translate(-11 -14.5)"><defs><linearGradient id="spg2" x1="0" y1="0" x2="1" y2="0"><stop offset="0" stop-color="#10b88c"/><stop offset="0.5" stop-color="#2ee6b2"/><stop offset="1" stop-color="#10a07a"/></linearGradient></defs><g transform="rotate(-45 11 14.5)"><path d="M4.4 7.6Q1.8 14.5 4.4 21.4" fill="none" stroke="#12946e" stroke-width="1.5"/><path d="M2 9.6Q0.2 14.5 2 19.4" fill="none" stroke="#12946e" stroke-width="1.2"/><ellipse cx="11.4" cy="14.5" rx="4.4" ry="10.2" fill="#07241e"/><ellipse cx="10.6" cy="14.5" rx="4.2" ry="9.6" fill="url(#spg2)" stroke="#0a3a30" stroke-width="0.8"/><ellipse cx="10.8" cy="14.5" rx="2.7" ry="7.2" fill="none" stroke="#0b5a46" stroke-width="0.7"/><ellipse cx="11.2" cy="14" rx="1.5" ry="3.4" fill="#0a3c30"/></g></g><path d="M10.8 1.2V4.2M14.4 6.5L16.9 4.3M16.3 10.3H20" stroke="#1aa27c" stroke-width="1.3" fill="none"/></svg>
<span class="t" style="left:77px;top:354px;color:#ff7f0e;">Audio9German</span>
<div style="left:41px;top:380px;width:12px;height:1px;background:repeating-linear-gradient(to right,#808080 0 1px,transparent 1px 2px)"></div>
<svg class="i" style="left:51px;top:370px" width="22" height="20" viewBox="0 0 22 20"><path d="M18.2 6.8Q20.4 6.8 20.4 8.6V13.6Q20.4 14.8 19.2 14.8L20.6 17.6L16.8 14.8H12" fill="#edd067" stroke="#c8a73c" stroke-width="0.8"/><path d="M3 2.6H16.8Q17.8 2.6 17.8 3.6V11.4Q17.8 12.4 16.8 12.4H7.4L2 16.8L4 12.4H3Q2 12.4 2 11.4V3.6Q2 2.6 3 2.6Z" fill="#ffe04a" stroke="#d0a82a" stroke-width="0.9"/><path d="M4.2 5.8H15.4M4.2 9.6H15.4" stroke="#98590f" stroke-width="1.7"/></svg>
<span class="t" style="left:77px;top:374px;color:#a52a2a;">Subtitle1English</span>
<div style="left:41px;top:400px;width:12px;height:1px;background:repeating-linear-gradient(to right,#808080 0 1px,transparent 1px 2px)"></div>
<svg class="i" style="left:51px;top:390px" width="22" height="20" viewBox="0 0 22 20"><path d="M18.2 6.8Q20.4 6.8 20.4 8.6V13.6Q20.4 14.8 19.2 14.8L20.6 17.6L16.8 14.8H12" fill="#edd067" stroke="#c8a73c" stroke-width="0.8"/><path d="M3 2.6H16.8Q17.8 2.6 17.8 3.6V11.4Q17.8 12.4 16.8 12.4H7.4L2 16.8L4 12.4H3Q2 12.4 2 11.4V3.6Q2 2.6 3 2.6Z" fill="#ffe04a" stroke="#d0a82a" stroke-width="0.9"/><path d="M4.2 5.8H15.4M4.2 9.6H15.4" stroke="#98590f" stroke-width="1.7"/></svg>
<span class="t" style="left:77px;top:394px;color:#a52a2a;">Subtitle2Russian</span>
<div style="left:41px;top:420px;width:12px;height:1px;background:repeating-linear-gradient(to right,#808080 0 1px,transparent 1px 2px)"></div>
<svg class="i" style="left:51px;top:410px" width="22" height="20" viewBox="0 0 22 20"><path d="M18.2 6.8Q20.4 6.8 20.4 8.6V13.6Q20.4 14.8 19.2 14.8L20.6 17.6L16.8 14.8H12" fill="#edd067" stroke="#c8a73c" stroke-width="0.8"/><path d="M3 2.6H16.8Q17.8 2.6 17.8 3.6V11.4Q17.8 12.4 16.8 12.4H7.4L2 16.8L4 12.4H3Q2 12.4 2 11.4V3.6Q2 2.6 3 2.6Z" fill="#ffe04a" stroke="#d0a82a" stroke-width="0.9"/><path d="M4.2 5.8H15.4M4.2 9.6H15.4" stroke="#98590f" stroke-width="1.7"/></svg>
<span class="t" style="left:77px;top:414px;color:#a52a2a;">Subtitle3German</span>
<div style="left:41px;top:440px;width:12px;height:1px;background:repeating-linear-gradient(to right,#808080 0 1px,transparent 1px 2px)"></div>
<svg class="i" style="left:51px;top:430px" width="22" height="20" viewBox="0 0 22 20"><path d="M18.2 6.8Q20.4 6.8 20.4 8.6V13.6Q20.4 14.8 19.2 14.8L20.6 17.6L16.8 14.8H12" fill="#edd067" stroke="#c8a73c" stroke-width="0.8"/><path d="M3 2.6H16.8Q17.8 2.6 17.8 3.6V11.4Q17.8 12.4 16.8 12.4H7.4L2 16.8L4 12.4H3Q2 12.4 2 11.4V3.6Q2 2.6 3 2.6Z" fill="#ffe04a" stroke="#d0a82a" stroke-width="0.9"/><path d="M4.2 5.8H15.4M4.2 9.6H15.4" stroke="#98590f" stroke-width="1.7"/></svg>
<span class="t" style="left:77px;top:434px;color:#a52a2a;">Subtitle4Spanish</span>
<div style="left:41px;top:460px;width:12px;height:1px;background:repeating-linear-gradient(to right,#808080 0 1px,transparent 1px 2px)"></div>
<svg class="i" style="left:51px;top:450px" width="22" height="20" viewBox="0 0 22 20"><path d="M18.2 6.8Q20.4 6.8 20.4 8.6V13.6Q20.4 14.8 19.2 14.8L20.6 17.6L16.8 14.8H12" fill="#edd067" stroke="#c8a73c" stroke-width="0.8"/><path d="M3 2.6H16.8Q17.8 2.6 17.8 3.6V11.4Q17.8 12.4 16.8 12.4H7.4L2 16.8L4 12.4H3Q2 12.4 2 11.4V3.6Q2 2.6 3 2.6Z" fill="#ffe04a" stroke="#d0a82a" stroke-width="0.9"/><path d="M4.2 5.8H15.4M4.2 9.6H15.4" stroke="#98590f" stroke-width="1.7"/></svg>
<span class="t" style="left:77px;top:454px;color:#a52a2a;">Subtitle5French</span>
<div style="left:41px;top:480px;width:12px;height:1px;background:repeating-linear-gradient(to right,#808080 0 1px,transparent 1px 2px)"></div>
<svg class="i" style="left:51px;top:470px" width="22" height="20" viewBox="0 0 22 20"><path d="M18.2 6.8Q20.4 6.8 20.4 8.6V13.6Q20.4 14.8 19.2 14.8L20.6 17.6L16.8 14.8H12" fill="#edd067" stroke="#c8a73c" stroke-width="0.8"/><path d="M3 2.6H16.8Q17.8 2.6 17.8 3.6V11.4Q17.8 12.4 16.8 12.4H7.4L2 16.8L4 12.4H3Q2 12.4 2 11.4V3.6Q2 2.6 3 2.6Z" fill="#ffe04a" stroke="#d0a82a" stroke-width="0.9"/><path d="M4.2 5.8H15.4M4.2 9.6H15.4" stroke="#98590f" stroke-width="1.7"/></svg>
<span class="t" style="left:77px;top:474px;color:#a52a2a;">Subtitle6Ukrainian</span>
<div style="left:21px;top:500px;width:8px;height:1px;background:repeating-linear-gradient(to right,#808080 0 1px,transparent 1px 2px)"></div>
<svg class="i" style="left:12px;top:496px" width="9" height="9" viewBox="0 0 9 9"><rect x="0.5" y="0.5" width="8" height="8" rx="1" fill="#fafafa" stroke="#9a9a9a"/><path d="M2 4.5h5" stroke="#3a4ea0" stroke-width="1"/></svg>
<svg class="i" style="left:28px;top:490px" width="22" height="20" viewBox="0 0 22 20"><defs><linearGradient id="tfg" x1="0" y1="0" x2="1" y2="1"><stop offset="0" stop-color="#dc8a2c"/><stop offset="1" stop-color="#a8522c"/></linearGradient></defs><path d="M1.4 2Q1.4 1.2 2.2 1.2H6.6Q7.4 1.2 7.7 1.9L8.8 4.6H16.6Q17.4 4.6 17.4 5.4V8H3.4L1.4 15Z" fill="#d0802a"/><path d="M3.2 7.4L4 6.4H18.4" stroke="#f2f0ee" stroke-width="1.2" fill="none"/><path d="M4.4 8.4Q4.6 7.6 5.4 7.6H20.2Q21.2 7.6 21 8.6L18.8 17.4Q18.6 18.2 17.8 18.2H2.4Q1.4 18.2 1.7 17.2Z" fill="url(#tfg)"/><path d="M2 18.3H18" stroke="#8a4a2a" stroke-width="0.5" opacity="0.7"/></svg>
<span class="t" style="left:54px;top:494px;">00003</span>
<div style="left:41px;top:520px;width:12px;height:1px;background:repeating-linear-gradient(to right,#808080 0 1px,transparent 1px 2px)"></div>
<svg class="i" style="left:51px;top:510px" width="22" height="20" viewBox="0 0 22 20"><path d="M7.6 0.4H13.8V15.8L7.6 17.8Z" fill="#f4f8fe"/><path d="M3.3 0H7.9V18L3.3 19.2Z" fill="#1c2468"/><path d="M13.4 0.2L18 0.5V15.2L13.4 16.4Z" fill="#1f5596"/><path d="M13.4 0.2H14.8V16L13.4 16.4Z" fill="#0c1c5c"/><path d="M7.9 0.3H13.6V0.9H7.9ZM7.9 3.1H13.6V4H7.9ZM7.9 10H13.6V11H7.9ZM7.9 17L13.6 15.4V16.4L7.9 18Z" fill="#1c2468"/><rect x="9.2" y="5.6" width="3" height="3.2" fill="#cfe0f6"/><rect x="9.2" y="12.4" width="3" height="2.6" fill="#cfe0f6"/><rect x="5" y="2.8" width="1.9" height="2.1" fill="#fbfbf6"/><rect x="5" y="6.6" width="1.9" height="2.1" fill="#fbfbf6"/><rect x="5" y="10.2" width="1.9" height="2.1" fill="#fbfbf6"/><rect x="5" y="13.8" width="1.9" height="2.1" fill="#fbfbf6"/><rect x="15" y="3" width="1.3" height="1.9" fill="#f6f8fb"/><rect x="15" y="6.8" width="1.3" height="1.9" fill="#f6f8fb"/><rect x="15" y="10.4" width="1.3" height="1.9" fill="#f6f8fb"/></svg>
<span class="t" style="left:77px;top:514px;color:#0c860c;">DVDLogic</span>
<div style="left:21px;top:540px;width:8px;height:1px;background:repeating-linear-gradient(to right,#808080 0 1px,transparent 1px 2px)"></div>
<svg class="i" style="left:12px;top:536px" width="9" height="9" viewBox="0 0 9 9"><rect x="0.5" y="0.5" width="8" height="8" rx="1" fill="#fafafa" stroke="#9a9a9a"/><path d="M2 4.5h5" stroke="#3a4ea0" stroke-width="1"/></svg>
<svg class="i" style="left:28px;top:530px" width="22" height="20" viewBox="0 0 22 20"><defs><linearGradient id="tfg" x1="0" y1="0" x2="1" y2="1"><stop offset="0" stop-color="#dc8a2c"/><stop offset="1" stop-color="#a8522c"/></linearGradient></defs><path d="M1.4 2Q1.4 1.2 2.2 1.2H6.6Q7.4 1.2 7.7 1.9L8.8 4.6H16.6Q17.4 4.6 17.4 5.4V8H3.4L1.4 15Z" fill="#d0802a"/><path d="M3.2 7.4L4 6.4H18.4" stroke="#f2f0ee" stroke-width="1.2" fill="none"/><path d="M4.4 8.4Q4.6 7.6 5.4 7.6H20.2Q21.2 7.6 21 8.6L18.8 17.4Q18.6 18.2 17.8 18.2H2.4Q1.4 18.2 1.7 17.2Z" fill="url(#tfg)"/><path d="M2 18.3H18" stroke="#8a4a2a" stroke-width="0.5" opacity="0.7"/></svg>
<span class="t" style="left:54px;top:534px;">00004</span>
<div style="left:41px;top:560px;width:12px;height:1px;background:repeating-linear-gradient(to right,#808080 0 1px,transparent 1px 2px)"></div>
<svg class="i" style="left:51px;top:550px" width="22" height="20" viewBox="0 0 22 20"><path d="M7.6 0.4H13.8V15.8L7.6 17.8Z" fill="#f4f8fe"/><path d="M3.3 0H7.9V18L3.3 19.2Z" fill="#1c2468"/><path d="M13.4 0.2L18 0.5V15.2L13.4 16.4Z" fill="#1f5596"/><path d="M13.4 0.2H14.8V16L13.4 16.4Z" fill="#0c1c5c"/><path d="M7.9 0.3H13.6V0.9H7.9ZM7.9 3.1H13.6V4H7.9ZM7.9 10H13.6V11H7.9ZM7.9 17L13.6 15.4V16.4L7.9 18Z" fill="#1c2468"/><rect x="9.2" y="5.6" width="3" height="3.2" fill="#cfe0f6"/><rect x="9.2" y="12.4" width="3" height="2.6" fill="#cfe0f6"/><rect x="5" y="2.8" width="1.9" height="2.1" fill="#fbfbf6"/><rect x="5" y="6.6" width="1.9" height="2.1" fill="#fbfbf6"/><rect x="5" y="10.2" width="1.9" height="2.1" fill="#fbfbf6"/><rect x="5" y="13.8" width="1.9" height="2.1" fill="#fbfbf6"/><rect x="15" y="3" width="1.3" height="1.9" fill="#f6f8fb"/><rect x="15" y="6.8" width="1.3" height="1.9" fill="#f6f8fb"/><rect x="15" y="10.4" width="1.3" height="1.9" fill="#f6f8fb"/></svg>
<span class="t" style="left:77px;top:554px;color:#0c860c;">Warning</span>
<div style="left:21px;top:580px;width:8px;height:1px;background:repeating-linear-gradient(to right,#808080 0 1px,transparent 1px 2px)"></div>
<svg class="i" style="left:12px;top:576px" width="9" height="9" viewBox="0 0 9 9"><rect x="0.5" y="0.5" width="8" height="8" rx="1" fill="#fafafa" stroke="#9a9a9a"/><path d="M2 4.5h5" stroke="#3a4ea0" stroke-width="1"/></svg>
<svg class="i" style="left:28px;top:570px" width="22" height="20" viewBox="0 0 22 20"><defs><linearGradient id="tfg" x1="0" y1="0" x2="1" y2="1"><stop offset="0" stop-color="#dc8a2c"/><stop offset="1" stop-color="#a8522c"/></linearGradient></defs><path d="M1.4 2Q1.4 1.2 2.2 1.2H6.6Q7.4 1.2 7.7 1.9L8.8 4.6H16.6Q17.4 4.6 17.4 5.4V8H3.4L1.4 15Z" fill="#d0802a"/><path d="M3.2 7.4L4 6.4H18.4" stroke="#f2f0ee" stroke-width="1.2" fill="none"/><path d="M4.4 8.4Q4.6 7.6 5.4 7.6H20.2Q21.2 7.6 21 8.6L18.8 17.4Q18.6 18.2 17.8 18.2H2.4Q1.4 18.2 1.7 17.2Z" fill="url(#tfg)"/><path d="M2 18.3H18" stroke="#8a4a2a" stroke-width="0.5" opacity="0.7"/></svg>
<span class="t" style="left:54px;top:574px;">00005</span>
<div style="left:41px;top:600px;width:12px;height:1px;background:repeating-linear-gradient(to right,#808080 0 1px,transparent 1px 2px)"></div>
<svg class="i" style="left:51px;top:590px" width="22" height="20" viewBox="0 0 22 20"><rect x="2.5" y="3" width="17.4" height="14.2" rx="0.8" fill="#efe5c8" stroke="#8a6440" stroke-width="1.4"/><path d="M3.6 4.4H18.8" stroke="#faf5e4" stroke-width="1"/><circle cx="5.9" cy="13.2" r="1.35" fill="#d0101a"/><circle cx="11" cy="13.2" r="1.35" fill="#1822b8"/><circle cx="16.2" cy="13.2" r="1.35" fill="#167a2a"/></svg>
<span class="t" style="left:77px;top:594px;color:#10108a;">MainMenu</span>
<div style="left:21px;top:620px;width:8px;height:1px;background:repeating-linear-gradient(to right,#808080 0 1px,transparent 1px 2px)"></div>
<svg class="i" style="left:12px;top:616px" width="9" height="9" viewBox="0 0 9 9"><rect x="0.5" y="0.5" width="8" height="8" rx="1" fill="#fafafa" stroke="#9a9a9a"/><path d="M2 4.5h5" stroke="#3a4ea0" stroke-width="1"/></svg>
<svg class="i" style="left:28px;top:610px" width="22" height="20" viewBox="0 0 22 20"><defs><linearGradient id="tfg" x1="0" y1="0" x2="1" y2="1"><stop offset="0" stop-color="#dc8a2c"/><stop offset="1" stop-color="#a8522c"/></linearGradient></defs><path d="M1.4 2Q1.4 1.2 2.2 1.2H6.6Q7.4 1.2 7.7 1.9L8.8 4.6H16.6Q17.4 4.6 17.4 5.4V8H3.4L1.4 15Z" fill="#d0802a"/><path d="M3.2 7.4L4 6.4H18.4" stroke="#f2f0ee" stroke-width="1.2" fill="none"/><path d="M4.4 8.4Q4.6 7.6 5.4 7.6H20.2Q21.2 7.6 21 8.6L18.8 17.4Q18.6 18.2 17.8 18.2H2.4Q1.4 18.2 1.7 17.2Z" fill="url(#tfg)"/><path d="M2 18.3H18" stroke="#8a4a2a" stroke-width="0.5" opacity="0.7"/></svg>
<span class="t" style="left:54px;top:614px;">00006</span>
<div style="left:41px;top:640px;width:12px;height:1px;background:repeating-linear-gradient(to right,#808080 0 1px,transparent 1px 2px)"></div>
<svg class="i" style="left:51px;top:630px" width="22" height="20" viewBox="0 0 22 20"><rect x="2.5" y="3" width="17.4" height="14.2" rx="0.8" fill="#efe5c8" stroke="#8a6440" stroke-width="1.4"/><path d="M3.6 4.4H18.8" stroke="#faf5e4" stroke-width="1"/><circle cx="5.9" cy="13.2" r="1.35" fill="#d0101a"/><circle cx="11" cy="13.2" r="1.35" fill="#1822b8"/><circle cx="16.2" cy="13.2" r="1.35" fill="#167a2a"/></svg>
<span class="t" style="left:77px;top:634px;color:#10108a;">PopUpMenu</span>
<div style="left:2px;top:668px;width:419px;height:28px;background:#f6f6fa"></div>
<svg class="i" style="left:1px;top:668px" width="64" height="26" viewBox="0 0 64 26"><path d="M0.5 -0.5V19.5Q0.5 21.5 2.5 21.5H55Q57.5 21.5 58 19.5L59.8 4.5Q60 2.5 62 2.5H64" fill="#fff" stroke="#8a8f9c" stroke-width="1"/></svg>
<div style="left:64px;top:670px;width:352px;height:1px;background:#8a8f9c"></div>
<svg class="i" style="left:5px;top:671px" width="17" height="17" viewBox="0 0 17 17"><defs><radialGradient id="tasg" cx="0.3" cy="0.7" r="0.8"><stop offset="0" stop-color="#e8f6e2"/><stop offset="0.5" stop-color="#a6d79a"/><stop offset="1" stop-color="#62b257"/></radialGradient></defs><path d="M5.4 2.2Q12 -0.4 15.2 5.4Q17.4 10.8 13.4 14.6L6 9.4Z" fill="url(#tasg)" stroke="#5aa84e" stroke-width="0.7"/><path d="M7 5.4Q10.6 3.8 12.6 7Q13.8 10 11.6 12.2" fill="none" stroke="#e6f4e0" stroke-width="0.9"/><path d="M0.8 2.4L15.6 15.8L14.6 16.6H2.6Q1.8 16.6 1.7 15.8Z" fill="#f4c9a4" stroke="#c98556" stroke-width="0.9" stroke-linejoin="round"/></svg>
<span class="t" style="left:24px;top:674px;">Assets</span>
<svg class="i" style="left:63px;top:672px" width="17" height="16" viewBox="0 0 17 16"><defs><linearGradient id="tclg" x1="0" y1="0" x2="0" y2="1"><stop offset="0" stop-color="#5aa8f4"/><stop offset="1" stop-color="#1d63c8"/></linearGradient></defs><circle cx="4.4" cy="3.6" r="2.4" fill="#dbe9fb" stroke="#1f4fa8" stroke-width="1.2"/><circle cx="9.6" cy="3.6" r="2.4" fill="#dbe9fb" stroke="#1f4fa8" stroke-width="1.2"/><rect x="0.9" y="6.8" width="11.6" height="8.2" rx="1.2" fill="url(#tclg)" stroke="#1c58b8" stroke-width="0.8"/><path d="M12.8 10.2L16.2 7.8V14.6L12.8 12.4Z" fill="#1f5cc0"/></svg>
<span class="t" style="left:83px;top:674px;color:#6f7c8f;">Clips</span>
<div style="left:109px;top:672px;width:1px;height:15px;background:#9a9a9a"></div>
<svg class="i" style="left:114px;top:672px" width="16" height="16" viewBox="0 0 16 16"><circle cx="7.8" cy="7.5" r="6.4" fill="#fdeadb" stroke="#3a2618" stroke-width="1.4"/><path d="M5.8 4.2L11.4 7.5L5.8 10.8Z" fill="#2a1608"/></svg>
<span class="t" style="left:133px;top:674px;color:#6f7c8f;">PlayLists</span>
<div style="left:178px;top:672px;width:1px;height:15px;background:#9a9a9a"></div>
<svg class="i" style="left:182px;top:671px" width="17" height="17" viewBox="0 0 17 17"><defs><linearGradient id="ttg" x1="0" y1="0" x2="0" y2="1"><stop offset="0" stop-color="#de8a35"/><stop offset="1" stop-color="#a85a1c"/></linearGradient></defs><rect x="5.6" y="1.2" width="7" height="5.6" rx="0.6" fill="url(#ttg)"/><path d="M9.1 6.8V10M3 13V10H15.2V13M9.1 10V13" stroke="#c8862a" stroke-width="1.2" fill="none"/><rect x="0.8" y="12.8" width="4.4" height="3.8" rx="0.6" fill="#a85a1c"/><rect x="6.9" y="12.8" width="4.4" height="3.8" rx="0.6" fill="#a85a1c"/><rect x="13" y="12.8" width="4" height="3.8" rx="0.6" fill="#a85a1c"/></svg>
<span class="t" style="left:203px;top:674px;color:#6f7c8f;">Titles</span>
<div style="left:1px;top:696px;width:416px;height:1px;background:#9a9a9a"></div>
<div style="left:2px;top:697px;width:414px;height:22px;background:#f0f0f6"></div>
<div style="left:416px;top:696px;width:1px;height:23px;background:#9a9a9a"></div>
<div style="left:417px;top:90px;width:4px;height:909px;background:#f6f6fa"></div>
<span class="t" style="left:7px;top:702px;">Properties</span>
<svg class="i" style="left:379px;top:702px" width="10" height="12" viewBox="0 0 10 12"><path d="M2.5 2.5h5M3.5 2.5v4.5M6.5 2.5v4.5M7.5 2.5v4.5M1.5 7.5h7M4.5 8v3" stroke="#000" stroke-width="1" fill="none"/></svg>
<svg class="i" style="left:400px;top:703px" width="10" height="10" viewBox="0 0 10 10"><path d="M1.7 1.7l6.6 6.6M8.3 1.7l-6.6 6.6" stroke="#000" stroke-width="2" fill="none"/></svg>
<div style="left:2px;top:719px;width:415px;height:26px;background:#f0f0f0"></div>
<div style="left:3px;top:721px;width:24px;height:22px;background:#cfe6fa;border:1px solid #9ccbf3"></div>
<svg class="i" style="left:6px;top:723px" width="18" height="18" viewBox="0 0 18 18"><rect x="1" y="0.8" width="5.4" height="5.4" rx="0.8" fill="#fff" stroke="#5a8fd0" stroke-width="0.9"/><path d="M2.2 3.5H5.2M3.7 2.0V5.0" stroke="#000" stroke-width="1.1"/><rect x="1" y="9.8" width="5.4" height="5.4" rx="0.8" fill="#fff" stroke="#5a8fd0" stroke-width="0.9"/><path d="M2.2 12.5H5.2M3.7 11.0V14.0" stroke="#000" stroke-width="1.1"/><path d="M8.2 2.2H12M8.2 13.2H12" stroke="#555" stroke-width="1.1"/><path d="M8.2 4.4H12" stroke="#8a9a8a" stroke-width="0.9"/><path d="M13.2 4.4H16.2" stroke="#8f8aa8" stroke-width="0.9"/><path d="M8.2 6.4H12" stroke="#8a9a8a" stroke-width="0.9"/><path d="M13.2 6.4H16.2" stroke="#8f8aa8" stroke-width="0.9"/><path d="M8.2 8.4H12" stroke="#8a9a8a" stroke-width="0.9"/><path d="M13.2 8.4H16.2" stroke="#8f8aa8" stroke-width="0.9"/><path d="M8.2 10.4H12" stroke="#8a9a8a" stroke-width="0.9"/><path d="M13.2 10.4H16.2" stroke="#8f8aa8" stroke-width="0.9"/><path d="M8.2 15.4H12" stroke="#8a9a8a" stroke-width="0.9"/><path d="M13.2 15.4H16.2" stroke="#8f8aa8" stroke-width="0.9"/></svg>
<svg class="i" style="left:29px;top:723px" width="18" height="18" viewBox="0 0 18 18"><text x="0" y="8" font-family="Liberation Serif,serif" font-weight="bold" font-size="10" fill="#2a3cb0">A</text><text x="0.4" y="16.4" font-family="Liberation Serif,serif" font-weight="bold" font-size="10" fill="#a3202a">Z</text><path d="M12.5 1V14" stroke="#000" stroke-width="1.1"/><path d="M10 11.4L12.5 16L15 11.4Z" fill="#000"/></svg>
<div style="left:51px;top:722px;width:1px;height:20px;background:#8a8a8a"></div>
<svg class="i" style="left:57px;top:723px" width="18" height="18" viewBox="0 0 18 18"><rect x="1.5" y="1.5" width="15" height="14" fill="#e4e4e4" stroke="#b4b4b4" stroke-width="1"/><path d="M2 3.2H16" stroke="#c4c4c4" stroke-width="1.6"/><path d="M3.6 13.4V6.8H8L9 5.6H14.2V13.4Z" fill="#ededed" stroke="#c0c0c0" stroke-width="0.8"/><path d="M5 9H5.8M5 11.2H5.8M7 11.2H11.6" stroke="#b0b0b0" stroke-width="0.9"/></svg>
<div style="left:2px;top:745px;width:415px;height:192px;background:#fff;border:1px solid #828790;border-left:0"></div>
<div style="left:2px;top:746px;width:21px;height:190px;background:#f0f4fb"></div>
<div style="left:2px;top:746px;width:397px;height:16px;background:#f0f4fb"></div>
<svg class="i" style="left:7px;top:750px" width="10" height="8" viewBox="0 0 10 8"><path d="M1 1.5l4 4 4-4" stroke="#404040" stroke-width="1.3" fill="none"/></svg>
<span class="b" style="left:27px;top:749px;font-size:11.5px">Asset</span>
<div style="left:23px;top:762px;width:121px;height:15px;background:#f2f4fb"></div>
<div style="left:23px;top:777px;width:376px;height:1px;background:#f0f4fb"></div>
<div style="left:144px;top:762px;width:1px;height:16px;background:#f0f4fb"></div>
<span class="t" style="left:27px;top:765px;color:#000;height:13px;overflow:hidden">Name</span>
<span class="t" style="left:148px;top:765px;color:#000;height:13px;overflow:hidden">Film</span>
<div style="left:23px;top:793px;width:376px;height:1px;background:#f0f4fb"></div>
<div style="left:144px;top:778px;width:1px;height:16px;background:#f0f4fb"></div>
<span class="t" style="left:27px;top:781px;color:#6d6d6d;height:13px;overflow:hidden">IsMuxed</span>
<span class="t" style="left:148px;top:781px;color:#6d6d6d;height:13px;overflow:hidden">False</span>
<div style="left:23px;top:809px;width:376px;height:1px;background:#f0f4fb"></div>
<div style="left:144px;top:794px;width:1px;height:16px;background:#f0f4fb"></div>
<span class="t" style="left:27px;top:797px;color:#6d6d6d;height:13px;overflow:hidden">Type</span>
<span class="t" style="left:148px;top:797px;color:#6d6d6d;height:13px;overflow:hidden">Video</span>
<div style="left:23px;top:825px;width:376px;height:1px;background:#f0f4fb"></div>
<div style="left:144px;top:810px;width:1px;height:16px;background:#f0f4fb"></div>
<span class="t" style="left:27px;top:813px;color:#6d6d6d;height:13px;overflow:hidden">Format</span>
<span class="t" style="left:148px;top:813px;color:#6d6d6d;height:13px;overflow:hidden">MPEG-4 AVC</span>
<div style="left:23px;top:841px;width:376px;height:1px;background:#f0f4fb"></div>
<div style="left:144px;top:826px;width:1px;height:16px;background:#f0f4fb"></div>
<span class="t" style="left:27px;top:829px;color:#6d6d6d;height:13px;overflow:hidden">File path</span>
<span class="t" style="left:148px;top:829px;color:#6d6d6d;letter-spacing:0.45px;height:13px;overflow:hidden">D:\DVDLogic\DATA\Film.264</span>
<div style="left:23px;top:857px;width:376px;height:1px;background:#f0f4fb"></div>
<div style="left:144px;top:842px;width:1px;height:16px;background:#f0f4fb"></div>
<span class="t" style="left:27px;top:845px;color:#6d6d6d;height:13px;overflow:hidden">Size</span>
<span class="t" style="left:148px;top:845px;color:#6d6d6d;height:13px;overflow:hidden">29,042,377</span>
<div style="left:2px;top:858px;width:397px;height:16px;background:#f0f4fb"></div>
<svg class="i" style="left:7px;top:862px" width="10" height="8" viewBox="0 0 10 8"><path d="M1 1.5l4 4 4-4" stroke="#404040" stroke-width="1.3" fill="none"/></svg>
<span class="b" style="left:27px;top:861px;font-size:11.5px">Properties</span>
<div style="left:23px;top:889px;width:376px;height:1px;background:#f0f4fb"></div>
<div style="left:144px;top:874px;width:1px;height:16px;background:#f0f4fb"></div>
<span class="t" style="left:27px;top:877px;color:#6d6d6d;height:13px;overflow:hidden">Video Format</span>
<span class="t" style="left:148px;top:877px;color:#6d6d6d;height:13px;overflow:hidden">1080p</span>
<div style="left:23px;top:905px;width:376px;height:1px;background:#f0f4fb"></div>
<div style="left:144px;top:890px;width:1px;height:16px;background:#f0f4fb"></div>
<span class="t" style="left:27px;top:893px;color:#6d6d6d;height:13px;overflow:hidden">Horizontal Size</span>
<span class="t" style="left:148px;top:893px;color:#6d6d6d;height:13px;overflow:hidden">1920</span>
<div style="left:23px;top:921px;width:376px;height:1px;background:#f0f4fb"></div>
<div style="left:144px;top:906px;width:1px;height:16px;background:#f0f4fb"></div>
<span class="t" style="left:27px;top:909px;color:#6d6d6d;height:13px;overflow:hidden">Vertical Size</span>
<span class="t" style="left:148px;top:909px;color:#6d6d6d;height:13px;overflow:hidden">1080</span>
<div style="left:23px;top:937px;width:376px;height:1px;background:#f0f4fb"></div>
<div style="left:144px;top:922px;width:1px;height:16px;background:#f0f4fb"></div>
<span class="t" style="left:27px;top:925px;color:#6d6d6d;height:11px;overflow:hidden">Aspect ratio</span>
<span class="t" style="left:148px;top:925px;color:#6d6d6d;height:11px;overflow:hidden">16 : 9</span>
<div style="left:399px;top:746px;width:16px;height:190px;background:#f0f0f0"></div>
<div style="left:399px;top:763px;width:16px;height:68px;background:#cdcdcd"></div>
<svg class="i" style="left:399px;top:746px" width="16" height="17" viewBox="0 0 16 17"><path d="M4.5 10.5L8 7l3.5 3.5" stroke="#5a5a5a" stroke-width="1.9" fill="none"/></svg>
<svg class="i" style="left:399px;top:919px" width="16" height="17" viewBox="0 0 16 17"><path d="M4.5 6.5L8 10l3.5 -3.5" stroke="#5a5a5a" stroke-width="1.9" fill="none"/></svg>
<div style="left:2px;top:940px;width:415px;height:59px;background:#f0f0f0;border:1px solid #828790;border-left:0"></div>
<span class="b" style="left:8px;top:945px;font-size:11.5px">Name</span>
<div style="left:421px;top:90px;width:1178px;height:57px;background:#f0f0f0;border:1px solid #9a9a9a;border-bottom:0"></div>
<div style="left:422px;top:91px;width:1176px;height:22px;background:#f0f0f6"></div>
<span class="t" style="left:427px;top:96px;">BD schema</span>
<svg class="i" style="left:1582px;top:97px" width="10" height="10" viewBox="0 0 10 10"><path d="M1.7 1.7l6.6 6.6M8.3 1.7l-6.6 6.6" stroke="#000" stroke-width="2" fill="none"/></svg>
<div style="left:422px;top:113px;width:1176px;height:33px;background:linear-gradient(#fefefe,#fafafa 60%,#ececec)"></div>
<div class="grip" style="left:425px;top:118px;width:2px;height:22px;"></div>
<svg class="i" style="left:433px;top:118px" width="24" height="24" viewBox="0 0 24 24"><path d="M15.6 15.1L22.4 21.7" stroke="#6e3418" stroke-width="3.8" stroke-linecap="round"/><path d="M16.2 15.1L22.0 20.7" stroke="#b4683e" stroke-width="1.3" stroke-linecap="round"/><circle cx="10" cy="9.5" r="7.5" fill="#f4efe8" stroke="#6a3014" stroke-width="2.3"/><circle cx="10" cy="9.5" r="6" fill="none" stroke="#c8a488" stroke-width="0.7"/><path d="M5.4 9.5H14.6M10 4.9V14.1" stroke="#3f9a3a" stroke-width="2.3"/></svg>
<svg class="i" style="left:466px;top:118px" width="24" height="24" viewBox="0 0 24 24"><path d="M9.6 15.1L2.799999999999999 21.7" stroke="#6e3418" stroke-width="3.8" stroke-linecap="round"/><path d="M9.0 15.1L3.199999999999999 20.7" stroke="#b4683e" stroke-width="1.3" stroke-linecap="round"/><circle cx="15.2" cy="9.5" r="7.5" fill="#f4efe8" stroke="#6a3014" stroke-width="2.3"/><circle cx="15.2" cy="9.5" r="6" fill="none" stroke="#c8a488" stroke-width="0.7"/><path d="M10.6 9.5H19.8" stroke="#d0452a" stroke-width="2.3"/></svg>
<div class="sep" style="left:497px;top:118px;width:1px;height:25px;"></div>
<svg class="i" style="left:504px;top:118px" width="24" height="24" viewBox="0 0 24 24"><defs><radialGradient id="fitg"><stop offset="0" stop-color="#0f6a80"/><stop offset="1" stop-color="#4fb8c4"/></radialGradient></defs><rect x="5" y="4.6" width="14.4" height="14.4" fill="url(#fitg)" stroke="#8fd4da" stroke-width="0.8"/><path d="M1 4.4V0.8H4.6M19.8 0.8H23.4V4.4M23.4 19.4V23H19.8M4.6 23H1V19.4" fill="none" stroke="#1f7f92" stroke-width="1.5"/></svg>
<svg class="i" style="left:422px;top:146px" width="1176" height="606" viewBox="422 146 1176 606"><defs><linearGradient id="nf" x1="0" x2="1" y1="0" y2="0"><stop offset="0" stop-color="#c3d1de"/><stop offset="0.35" stop-color="#adc8d4"/><stop offset="1" stop-color="#9bc0cb"/></linearGradient><linearGradient id="ns" x1="0" x2="1" y1="0" y2="0"><stop offset="0" stop-color="#1b2358"/><stop offset="0.18" stop-color="#3fa0a8"/><stop offset="0.5" stop-color="#34587a"/><stop offset="1" stop-color="#161c50"/></linearGradient><linearGradient id="nv" x1="0" x2="0" y1="0" y2="1"><stop offset="0" stop-color="#1b2358"/><stop offset="1" stop-color="#1b2358"/></linearGradient></defs><path d="M491.5 218.7L491.5 268.7" stroke="#0000ff" stroke-width="1" fill="none" shape-rendering="crispEdges"/><path d="M491.5 268.7L488.9 261.7L494.1 261.7Z" fill="#0000ff" shape-rendering="crispEdges"/><path d="M941.5 218.7L941.5 268.7" stroke="#0000ff" stroke-width="1" fill="none" shape-rendering="crispEdges"/><path d="M941.5 268.7L938.9 261.7L944.1 261.7Z" fill="#0000ff" shape-rendering="crispEdges"/><path d="M1241.5 218.7L1241.5 268.7" stroke="#0000ff" stroke-width="1" fill="none" shape-rendering="crispEdges"/><path d="M1241.5 268.7L1238.9 261.7L1244.1 261.7Z" fill="#0000ff" shape-rendering="crispEdges"/><path d="M491.5 318.7L491.5 368.7" stroke="#0000ff" stroke-width="1" fill="none" shape-rendering="crispEdges"/><path d="M491.5 368.7L488.9 361.7L494.1 361.7Z" fill="#0000ff" shape-rendering="crispEdges"/><path d="M941.5 318.7L941.5 368.7" stroke="#0000ff" stroke-width="1" fill="none" shape-rendering="crispEdges"/><path d="M941.5 368.7L938.9 361.7L944.1 361.7Z" fill="#0000ff" shape-rendering="crispEdges"/><path d="M1241.5 318.7L1241.5 368.7" stroke="#0000ff" stroke-width="1" fill="none" shape-rendering="crispEdges"/><path d="M1241.5 368.7L1238.9 361.7L1244.1 361.7Z" fill="#0000ff" shape-rendering="crispEdges"/><path d="M491.5 418.7L491.5 468.7" stroke="#0000ff" stroke-width="1" fill="none" shape-rendering="crispEdges"/><path d="M491.5 468.7L488.9 461.7L494.1 461.7Z" fill="#0000ff" shape-rendering="crispEdges"/><path d="M529.0 418.7L604.0 468.7" stroke="#0000ff" stroke-width="1" fill="none" shape-rendering="crispEdges"/><path d="M604.0 468.7L596.7 467.0L599.6 462.7Z" fill="#0000ff" shape-rendering="crispEdges"/><path d="M541.5 410.4L741.5 477.0" stroke="#0000ff" stroke-width="1" fill="none" shape-rendering="crispEdges"/><path d="M741.5 477.0L734.0 477.3L735.7 472.4Z" fill="#0000ff" shape-rendering="crispEdges"/><path d="M941.5 418.7L941.5 468.7" stroke="#0000ff" stroke-width="1" fill="none" shape-rendering="crispEdges"/><path d="M941.5 468.7L938.9 461.7L944.1 461.7Z" fill="#0000ff" shape-rendering="crispEdges"/><path d="M979.0 418.7L1054.0 468.7" stroke="#0000ff" stroke-width="1" fill="none" shape-rendering="crispEdges"/><path d="M1054.0 468.7L1046.7 467.0L1049.6 462.7Z" fill="#0000ff" shape-rendering="crispEdges"/><path d="M1241.5 418.7L1241.5 468.7" stroke="#0000ff" stroke-width="1" fill="none" shape-rendering="crispEdges"/><path d="M1241.5 468.7L1238.9 461.7L1244.1 461.7Z" fill="#0000ff" shape-rendering="crispEdges"/><path d="M1279.0 418.7L1354.0 468.7" stroke="#0000ff" stroke-width="1" fill="none" shape-rendering="crispEdges"/><path d="M1354.0 468.7L1346.7 467.0L1349.6 462.7Z" fill="#0000ff" shape-rendering="crispEdges"/><path d="M1091.5 518.7L1091.5 568.7" stroke="#0000ff" stroke-width="1" fill="none" shape-rendering="crispEdges"/><path d="M1091.5 568.7L1088.9 561.7L1094.1 561.7Z" fill="#0000ff" shape-rendering="crispEdges"/><path d="M1391.5 518.7L1391.5 568.7" stroke="#0000ff" stroke-width="1" fill="none" shape-rendering="crispEdges"/><path d="M1391.5 568.7L1388.9 561.7L1394.1 561.7Z" fill="#0000ff" shape-rendering="crispEdges"/><path d="M541.5 287.0L1191.5 200.4" stroke="#ff0000" stroke-width="1" fill="none" shape-rendering="crispEdges"/><path d="M1191.5 200.4L1184.9 203.9L1184.2 198.7Z" fill="#ff0000" shape-rendering="crispEdges"/><path d="M1191.5 277.0L991.5 210.4" stroke="#ff0000" stroke-width="1" fill="none" shape-rendering="crispEdges"/><path d="M991.5 210.4L999.0 210.1L997.3 215.0Z" fill="#ff0000" shape-rendering="crispEdges"/><g transform="translate(441 168)"><path d="M2 1H98Q99 1 99 2V48Q99 49 98 49H19L1 31V2Q1 1 2 1Z" fill="url(#nf)" stroke="url(#ns)" stroke-width="2" stroke-linejoin="round"/><path d="M1 2V31M99 2V48" stroke="#171d52" stroke-width="2" fill="none"/><path d="M0.7 36.2L13.2 49.3H0.7Z" fill="#b6ccd8" stroke="#2b3a66" stroke-width="1.4" stroke-linejoin="miter"/></g><g transform="translate(891 168)"><path d="M2 1H98Q99 1 99 2V48Q99 49 98 49H19L1 31V2Q1 1 2 1Z" fill="url(#nf)" stroke="url(#ns)" stroke-width="2" stroke-linejoin="round"/><path d="M1 2V31M99 2V48" stroke="#171d52" stroke-width="2" fill="none"/><path d="M0.7 36.2L13.2 49.3H0.7Z" fill="#b6ccd8" stroke="#2b3a66" stroke-width="1.4" stroke-linejoin="miter"/></g><g transform="translate(1191 168)"><path d="M2 1H98Q99 1 99 2V48Q99 49 98 49H19L1 31V2Q1 1 2 1Z" fill="url(#nf)" stroke="url(#ns)" stroke-width="2" stroke-linejoin="round"/><path d="M1 2V31M99 2V48" stroke="#171d52" stroke-width="2" fill="none"/><path d="M0.7 36.2L13.2 49.3H0.7Z" fill="#b6ccd8" stroke="#2b3a66" stroke-width="1.4" stroke-linejoin="miter"/></g><g transform="translate(441 268)"><path d="M2 1H98Q99 1 99 2V48Q99 49 98 49H19L1 31V2Q1 1 2 1Z" fill="url(#nf)" stroke="url(#ns)" stroke-width="2" stroke-linejoin="round"/><path d="M1 2V31M99 2V48" stroke="#171d52" stroke-width="2" fill="none"/><path d="M0.7 36.2L13.2 49.3H0.7Z" fill="#b6ccd8" stroke="#2b3a66" stroke-width="1.4" stroke-linejoin="miter"/></g><g transform="translate(891 268)"><path d="M2 1H98Q99 1 99 2V48Q99 49 98 49H19L1 31V2Q1 1 2 1Z" fill="url(#nf)" stroke="url(#ns)" stroke-width="2" stroke-linejoin="round"/><path d="M1 2V31M99 2V48" stroke="#171d52" stroke-width="2" fill="none"/><path d="M0.7 36.2L13.2 49.3H0.7Z" fill="#b6ccd8" stroke="#2b3a66" stroke-width="1.4" stroke-linejoin="miter"/></g><g transform="translate(1191 268)"><path d="M2 1H98Q99 1 99 2V48Q99 49 98 49H19L1 31V2Q1 1 2 1Z" fill="url(#nf)" stroke="url(#ns)" stroke-width="2" stroke-linejoin="round"/><path d="M1 2V31M99 2V48" stroke="#171d52" stroke-width="2" fill="none"/><path d="M0.7 36.2L13.2 49.3H0.7Z" fill="#b6ccd8" stroke="#2b3a66" stroke-width="1.4" stroke-linejoin="miter"/></g><g transform="translate(441 368)"><path d="M2 1H98Q99 1 99 2V48Q99 49 98 49H19L1 31V2Q1 1 2 1Z" fill="url(#nf)" stroke="url(#ns)" stroke-width="2" stroke-linejoin="round"/><path d="M1 2V31M99 2V48" stroke="#171d52" stroke-width="2" fill="none"/><path d="M0.7 36.2L13.2 49.3H0.7Z" fill="#b6ccd8" stroke="#2b3a66" stroke-width="1.4" stroke-linejoin="miter"/></g><g transform="translate(891 368)"><path d="M2 1H98Q99 1 99 2V48Q99 49 98 49H19L1 31V2Q1 1 2 1Z" fill="url(#nf)" stroke="url(#ns)" stroke-width="2" stroke-linejoin="round"/><path d="M1 2V31M99 2V48" stroke="#171d52" stroke-width="2" fill="none"/><path d="M0.7 36.2L13.2 49.3H0.7Z" fill="#b6ccd8" stroke="#2b3a66" stroke-width="1.4" stroke-linejoin="miter"/></g><g transform="translate(1191 368)"><path d="M2 1H98Q99 1 99 2V48Q99 49 98 49H19L1 31V2Q1 1 2 1Z" fill="url(#nf)" stroke="url(#ns)" stroke-width="2" stroke-linejoin="round"/><path d="M1 2V31M99 2V48" stroke="#171d52" stroke-width="2" fill="none"/><path d="M0.7 36.2L13.2 49.3H0.7Z" fill="#b6ccd8" stroke="#2b3a66" stroke-width="1.4" stroke-linejoin="miter"/></g><g transform="translate(441 468)"><path d="M2 1H98Q99 1 99 2V48Q99 49 98 49H19L1 31V2Q1 1 2 1Z" fill="url(#nf)" stroke="url(#ns)" stroke-width="2" stroke-linejoin="round"/><path d="M1 2V31M99 2V48" stroke="#171d52" stroke-width="2" fill="none"/><path d="M0.7 36.2L13.2 49.3H0.7Z" fill="#b6ccd8" stroke="#2b3a66" stroke-width="1.4" stroke-linejoin="miter"/></g><g transform="translate(591 468)"><path d="M2 1H98Q99 1 99 2V48Q99 49 98 49H19L1 31V2Q1 1 2 1Z" fill="url(#nf)" stroke="url(#ns)" stroke-width="2" stroke-linejoin="round"/><path d="M1 2V31M99 2V48" stroke="#171d52" stroke-width="2" fill="none"/><path d="M0.7 36.2L13.2 49.3H0.7Z" fill="#b6ccd8" stroke="#2b3a66" stroke-width="1.4" stroke-linejoin="miter"/></g><g transform="translate(741 468)"><path d="M2 1H98Q99 1 99 2V48Q99 49 98 49H19L1 31V2Q1 1 2 1Z" fill="url(#nf)" stroke="url(#ns)" stroke-width="2" stroke-linejoin="round"/><path d="M1 2V31M99 2V48" stroke="#171d52" stroke-width="2" fill="none"/><path d="M0.7 36.2L13.2 49.3H0.7Z" fill="#b6ccd8" stroke="#2b3a66" stroke-width="1.4" stroke-linejoin="miter"/></g><g transform="translate(891 468)"><path d="M2 1H98Q99 1 99 2V48Q99 49 98 49H19L1 31V2Q1 1 2 1Z" fill="url(#nf)" stroke="url(#ns)" stroke-width="2" stroke-linejoin="round"/><path d="M1 2V31M99 2V48" stroke="#171d52" stroke-width="2" fill="none"/><path d="M0.7 36.2L13.2 49.3H0.7Z" fill="#b6ccd8" stroke="#2b3a66" stroke-width="1.4" stroke-linejoin="miter"/></g><g transform="translate(1041 468)"><path d="M2 1H98Q99 1 99 2V48Q99 49 98 49H19L1 31V2Q1 1 2 1Z" fill="url(#nf)" stroke="url(#ns)" stroke-width="2" stroke-linejoin="round"/><path d="M1 2V31M99 2V48" stroke="#171d52" stroke-width="2" fill="none"/><path d="M0.7 36.2L13.2 49.3H0.7Z" fill="#b6ccd8" stroke="#2b3a66" stroke-width="1.4" stroke-linejoin="miter"/></g><g transform="translate(1191 468)"><path d="M2 1H98Q99 1 99 2V48Q99 49 98 49H19L1 31V2Q1 1 2 1Z" fill="url(#nf)" stroke="url(#ns)" stroke-width="2" stroke-linejoin="round"/><path d="M1 2V31M99 2V48" stroke="#171d52" stroke-width="2" fill="none"/><path d="M0.7 36.2L13.2 49.3H0.7Z" fill="#b6ccd8" stroke="#2b3a66" stroke-width="1.4" stroke-linejoin="miter"/></g><g transform="translate(1341 468)"><path d="M2 1H98Q99 1 99 2V48Q99 49 98 49H19L1 31V2Q1 1 2 1Z" fill="url(#nf)" stroke="url(#ns)" stroke-width="2" stroke-linejoin="round"/><path d="M1 2V31M99 2V48" stroke="#171d52" stroke-width="2" fill="none"/><path d="M0.7 36.2L13.2 49.3H0.7Z" fill="#b6ccd8" stroke="#2b3a66" stroke-width="1.4" stroke-linejoin="miter"/></g><g transform="translate(1041 568)"><path d="M2 1H98Q99 1 99 2V48Q99 49 98 49H19L1 31V2Q1 1 2 1Z" fill="url(#nf)" stroke="url(#ns)" stroke-width="2" stroke-linejoin="round"/><path d="M1 2V31M99 2V48" stroke="#171d52" stroke-width="2" fill="none"/><path d="M0.7 36.2L13.2 49.3H0.7Z" fill="#b6ccd8" stroke="#2b3a66" stroke-width="1.4" stroke-linejoin="miter"/></g><g transform="translate(1341 568)"><path d="M2 1H98Q99 1 99 2V48Q99 49 98 49H19L1 31V2Q1 1 2 1Z" fill="url(#nf)" stroke="url(#ns)" stroke-width="2" stroke-linejoin="round"/><path d="M1 2V31M99 2V48" stroke="#171d52" stroke-width="2" fill="none"/><path d="M0.7 36.2L13.2 49.3H0.7Z" fill="#b6ccd8" stroke="#2b3a66" stroke-width="1.4" stroke-linejoin="miter"/></g></svg>
<span class="t" style="left:445px;top:173px;width:99px;height:12px;overflow:hidden;font-size:9.5px;transform:scaleX(.96);color:#08081a">First Play</span>
<span class="t" style="left:895px;top:173px;width:99px;height:12px;overflow:hidden;font-size:9.5px;transform:scaleX(.96);color:#08081a">Top Menu</span>
<span class="t" style="left:1195px;top:173px;width:99px;height:12px;overflow:hidden;font-size:9.5px;transform:scaleX(.96);color:#08081a">Title 1</span>
<span class="t" style="left:445px;top:273px;width:99px;height:12px;overflow:hidden;font-size:9.5px;transform:scaleX(.96);color:#08081a">MovieObject 0</span>
<span class="t" style="left:895px;top:273px;width:99px;height:12px;overflow:hidden;font-size:9.5px;transform:scaleX(.96);color:#08081a">MovieObject 1</span>
<span class="t" style="left:1195px;top:273px;width:99px;height:12px;overflow:hidden;font-size:9.5px;transform:scaleX(.96);color:#08081a">MovieObject 2</span>
<span class="t" style="left:445px;top:373px;width:99px;height:12px;overflow:hidden;font-size:9.5px;transform:scaleX(.96);color:#08081a">PlayList 00000 Introduction</span>
<span class="t" style="left:895px;top:373px;width:99px;height:12px;overflow:hidden;font-size:9.5px;transform:scaleX(.96);color:#08081a">PlayList 00001 Top Menu</span>
<span class="t" style="left:1195px;top:373px;width:99px;height:12px;overflow:hidden;font-size:9.5px;transform:scaleX(.96);color:#08081a">PlayList 00002 Movie</span>
<span class="t" style="left:445px;top:473px;width:99px;height:12px;overflow:hidden;font-size:9.5px;transform:scaleX(.96);color:#08081a">PlayItem 0 Introduction</span>
<span class="t" style="left:595px;top:473px;width:99px;height:12px;overflow:hidden;font-size:9.5px;transform:scaleX(.96);color:#08081a">PlayItem 1 DVDLogic</span>
<span class="t" style="left:745px;top:473px;width:99px;height:12px;overflow:hidden;font-size:9.5px;transform:scaleX(.96);color:#08081a">PlayItem 2 Warning</span>
<span class="t" style="left:895px;top:473px;width:99px;height:12px;overflow:hidden;font-size:9.5px;transform:scaleX(.96);color:#08081a">PlayItem 0 Top Menu</span>
<span class="t" style="left:1045px;top:473px;width:99px;height:12px;overflow:hidden;font-size:9.5px;transform:scaleX(.96);color:#08081a">SubPath 0</span>
<span class="t" style="left:1195px;top:473px;width:99px;height:12px;overflow:hidden;font-size:9.5px;transform:scaleX(.96);color:#08081a">PlayItem 0 Movie</span>
<span class="t" style="left:1345px;top:473px;width:99px;height:12px;overflow:hidden;font-size:9.5px;transform:scaleX(.96);color:#08081a">SubPath 0</span>
<span class="t" style="left:1045px;top:573px;width:99px;height:12px;overflow:hidden;font-size:9.5px;transform:scaleX(.96);color:#08081a">SubPlayItem 0</span>
<span class="t" style="left:1345px;top:573px;width:99px;height:12px;overflow:hidden;font-size:9.5px;transform:scaleX(.96);color:#08081a">SubPlayItem 0</span>
<div style="left:421px;top:752px;width:1178px;height:1px;background:#9a9a9a"></div>
<div style="left:421px;top:753px;width:1178px;height:22px;background:linear-gradient(to right,#f4f4f8,#fbfbfd)"></div>
<svg class="i" style="left:678px;top:752px" width="88" height="24" viewBox="0 0 88 24"><path d="M2.5 0.5V17.5Q2.5 20.5 5.5 20.5H80.5Q83.5 20.5 83.5 17.5V0.5" fill="#fff" stroke="#8a8f9c"/><path d="M3 0.5H83" stroke="#fff" stroke-width="1.4"/></svg>
<svg class="i" style="left:424px;top:754px" width="17" height="17" viewBox="0 0 17 17"><circle cx="4.6" cy="3.4" r="2.2" fill="#f4c8a8" stroke="#c8602a" stroke-width="1.1"/><circle cx="9.6" cy="3.4" r="2.2" fill="#f4c8a8" stroke="#c8602a" stroke-width="1.1"/><rect x="1.4" y="6.2" width="11.2" height="8.2" rx="1" fill="#e8813c" stroke="#c05a22" stroke-width="0.8"/><path d="M12.8 9.6L16.2 7.4V13.8L12.8 11.8Z" fill="#d86a2c"/><path d="M2 9L9.6 15.6M9.6 9L2 15.6" stroke="#1f5ab0" stroke-width="1.5"/></svg>
<span class="t" style="left:443px;top:756px;color:#6f7c8f;">Clip Editor</span>
<div style="left:495px;top:755px;width:1px;height:15px;background:#9a9a9a"></div>
<svg class="i" style="left:499px;top:754px" width="17" height="17" viewBox="0 0 17 17"><circle cx="8.4" cy="8.4" r="7.4" fill="#4b2496"/><circle cx="8.40" cy="4.11" r="1.26" fill="#f4fbfc"/><circle cx="12.48" cy="7.07" r="1.26" fill="#f4fbfc"/><circle cx="10.92" cy="11.87" r="1.26" fill="#f4fbfc"/><circle cx="5.88" cy="11.87" r="1.26" fill="#f4fbfc"/><circle cx="4.32" cy="7.07" r="1.26" fill="#f4fbfc"/><circle cx="8.4" cy="8.4" r="1.2" fill="#f4fbfc"/></svg>
<span class="t" style="left:519px;top:756px;color:#6f7c8f;">MovieObjects</span>
<div style="left:588px;top:755px;width:1px;height:15px;background:#9a9a9a"></div>
<svg class="i" style="left:592px;top:754px" width="17" height="17" viewBox="0 0 17 17"><ellipse cx="8.9" cy="12" rx="7.6" ry="3.2" fill="#fdf6f2" stroke="#b8461c" stroke-width="1.4"/><path d="M2.6 13.6Q8.9 17.4 15.2 13.6" stroke="#b8461c" stroke-width="1.2" fill="none"/><path d="M4.4 8.2L9.5 6.2L14.6 8.2L9.5 10.6Z" fill="#2f8f36"/><path d="M4.4 5.7L9.5 3.7L14.6 5.7L9.5 8Z" fill="#93d66c"/><path d="M4.4 5.7L9.5 8L14.6 5.7V6.5L9.5 8.9L4.4 6.5Z" fill="#3a9a3c"/><path d="M4.4 3.1L9.5 1L14.6 3.1L9.5 5.4Z" fill="#58bc4c"/><path d="M4.4 3.1L9.5 5.4L14.6 3.1V3.9L9.5 6.3L4.4 3.9Z" fill="#2f8f36"/></svg>
<span class="t" style="left:612px;top:756px;color:#6f7c8f;">Java Objects</span>
<svg class="i" style="left:682px;top:754px" width="17" height="17" viewBox="0 0 17 17"><g transform="rotate(-30 5.8 4.2)"><ellipse cx="5.8" cy="4.2" rx="4.9" ry="2.8" fill="#f6e8e0" stroke="#a8421c" stroke-width="2.2"/></g><path d="M3.6 8H15.4V10.6H3.6Q2.4 9.3 3.6 8Z" fill="#5c8a48"/><path d="M6.4 9.3H15.4" stroke="#e9f0e2" stroke-width="0.9"/><path d="M4.6 11.8H16.6V14.6H4.6Q3.2 13.2 4.6 11.8Z" fill="#4a7a3a"/><path d="M7.4 13.2H16.6" stroke="#e9f0e2" stroke-width="0.9"/></svg>
<span class="t" style="left:702px;top:756px;">BD schema</span>
<div style="left:421px;top:778px;width:587px;height:221px;background:#fff;border:1px solid #9a9a9a;border-bottom-color:#828790"></div>
<div style="left:422px;top:779px;width:585px;height:22px;background:#f0f0f6"></div>
<span class="t" style="left:427px;top:784px;">Log</span>
<svg class="i" style="left:970px;top:784px" width="10" height="12" viewBox="0 0 10 12"><path d="M2.5 2.5h5M3.5 2.5v4.5M6.5 2.5v4.5M7.5 2.5v4.5M1.5 7.5h7M4.5 8v3" stroke="#000" stroke-width="1" fill="none"/></svg>
<svg class="i" style="left:991px;top:785px" width="10" height="10" viewBox="0 0 10 10"><path d="M1.7 1.7l6.6 6.6M8.3 1.7l-6.6 6.6" stroke="#000" stroke-width="2" fill="none"/></svg>
<div style="left:422px;top:801px;width:585px;height:35px;background:linear-gradient(#fefefe,#fafafa 60%,#ececec)"></div>
<div class="grip" style="left:425px;top:806px;width:2px;height:22px;"></div>
<svg class="i" style="left:434px;top:806px" width="24" height="24" viewBox="0 0 24 24"><defs><linearGradient id="lcg" x1="0" y1="0" x2="1" y2="0"><stop offset="0" stop-color="#2a94cc"/><stop offset="0.5" stop-color="#2260a8"/><stop offset="1" stop-color="#1b2c92"/></linearGradient><linearGradient id="lcd" x1="0" y1="0" x2="1" y2="0"><stop offset="0" stop-color="#ffd76a"/><stop offset="0.5" stop-color="#fff2b0"/><stop offset="1" stop-color="#ffd058"/></linearGradient></defs><path d="M7.4 3.4H10.6V8H7.4Z" fill="#ffd98a" stroke="#f09a50" stroke-width="0.7"/><path d="M11.4 0.4H19.6L23.4 4.2V17.6H11.4Z" fill="url(#lcd)" stroke="#f08c44" stroke-width="0.9"/><path d="M13.2 3.8H17M13.2 7H21.6M13.2 10.2H21.6M13.2 13.6H21.6" stroke="#4a3c24" stroke-width="1.5"/><path d="M14 19.6H19" stroke="#f4a838" stroke-width="1.6"/><path d="M17.6 20.6H22.6" stroke="#1d3aa0" stroke-width="1.6"/><path d="M0.2 7Q7 8.6 14 7.6V22.6Q7 24.4 0.2 22.2Z" fill="url(#lcg)"/><path d="M14 12.4H16.8V15.6H14Z" fill="#14208a"/></svg>
<svg class="i" style="left:466px;top:806px" width="24" height="24" viewBox="0 0 24 24"><path d="M4 1.4L7.4 1L14.2 13.4L12.2 15.6Q8 9.6 4 1.4Z" fill="#1b4478"/><path d="M20.2 1.4L16.8 1L10 13.4L12 15.6Q16.2 9.6 20.2 1.4Z" fill="#1b4478"/><ellipse cx="6.4" cy="20.2" rx="3.2" ry="2.6" fill="none" stroke="#1b4478" stroke-width="1.9"/><ellipse cx="17.8" cy="20.2" rx="3.2" ry="2.6" fill="none" stroke="#1b4478" stroke-width="1.9"/><path d="M8.6 18.4L12.4 13.8M15.6 18.4L11.8 13.8" stroke="#1b4478" stroke-width="2.4"/><circle cx="12.1" cy="14.2" r="0.7" fill="#f4f6fa"/></svg>
<svg class="i" style="left:498px;top:806px" width="24" height="24" viewBox="0 0 24 24"><defs><linearGradient id="plgb" gradientUnits="userSpaceOnUse" x1="5" y1="0" x2="23" y2="0"><stop offset="0" stop-color="#5c0012"/><stop offset="0.45" stop-color="#a00808"/><stop offset="0.8" stop-color="#d02c0c"/><stop offset="1" stop-color="#e8600c"/></linearGradient></defs><path d="M17.31 21.40A11.1 11.1 0 1 1 20.85 4.77" fill="none" stroke="#b41a1a" stroke-width="1.6"/><path d="M23.09 10.06A11.1 11.1 0 0 1 19.53 19.85" fill="none" stroke="#c43a3a" stroke-width="0.9"/><path fill="url(#plgb)" d="M6.56 6.91L14.88 14.40L12.34 17.23L4.02 9.73Z"/><path fill="url(#plgb)" d="M4.78 15.29L11.18 7.09L14.18 9.43L7.77 17.63Z"/><path fill="url(#plgb)" d="M10.6 9.6Q16.6 5.8 23.2 6Q17.8 8.6 14 13.6Z"/><path fill="url(#plgb)" d="M11.6 14.6Q15 18.2 17.4 23.2Q19.8 17 15.2 10.4Z"/><circle cx="12.8" cy="12" r="2.2" fill="#a00a0a"/></svg>
<svg class="i" style="left:530px;top:806px" width="24" height="24" viewBox="0 0 24 24"><defs><linearGradient id="llg" x1="0" y1="0" x2="1" y2="1"><stop offset="0" stop-color="#f0f1fa"/><stop offset="1" stop-color="#c6cade"/></linearGradient><linearGradient id="ldg" x1="0" y1="0" x2="1" y2="1"><stop offset="0" stop-color="#ff2a2a"/><stop offset="0.5" stop-color="#d40808"/><stop offset="1" stop-color="#f01818"/></linearGradient></defs><path d="M4.4 1.8H19.6Q21.2 1.8 21.2 3.4V20.2Q21.2 21.8 19.6 21.8H10.6L3 14.6V3.4Q3 1.8 4.4 1.8Z" fill="url(#llg)" stroke="#58628e" stroke-width="1.7" stroke-linejoin="round"/><path d="M6 5.2H18.4M6 9.4H18.4M6 13.6H18.4M11 18.4H18.4" stroke="#48527e" stroke-width="1.5"/><path d="M6.4 18L3.8 20.8" stroke="#3a4686" stroke-width="1.2"/><circle cx="3.6" cy="21" r="1.2" fill="#3a4686"/></svg>
<svg class="i" style="left:568px;top:806px" width="24" height="24" viewBox="0 0 24 24"><path d="M3.6 1.6H20.6Q21.6 1.6 21.6 2.6V21.2Q21.6 22.2 20.6 22.2H8.6L2.8 16.6V2.6Q2.8 1.6 3.6 1.6Z" fill="#f3e9c8" stroke="#b4a684" stroke-width="0.9"/><path d="M10 2L22.4 12.4" stroke="#e21414" stroke-width="5"/><path d="M21.4 2L3.6 19.8" stroke="#e01010" stroke-width="5.2"/><path d="M19.6 5.2L6.4 18.4" stroke="#c00606" stroke-width="1.6" opacity="0.55"/></svg>
<svg class="i" style="left:606px;top:806px" width="24" height="24" viewBox="0 0 24 24"><path d="M1 3.6H17.4V22.4H1Z" fill="#62a63e" stroke="#3f7a24" stroke-width="0.9"/><path d="M5.6 3.4V1.8H7.8L9.2 0.4L10.6 1.8H12.8V3.4Z" fill="#4f8f2e"/><path d="M3 5.6H15.6V20.6H3Z" fill="#fbfbf6"/><path d="M4.4 8H14M4.4 11H12M4.4 14H11M4.4 17H11" stroke="#1a1a1a" stroke-width="1.5"/><path d="M12.2 12H21.6L23.8 14.2V23H12.2Z" fill="#5653a4" stroke="#3c3a84" stroke-width="0.7"/><rect x="14.6" y="12.4" width="5.4" height="3.6" fill="#c9c8ea"/><circle cx="18" cy="19.4" r="2" fill="#dcdbf4" stroke="#3c3a84" stroke-width="0.7"/></svg>
<div class="sep" style="left:561px;top:805px;width:1px;height:26px;"></div>
<div class="sep" style="left:599px;top:805px;width:1px;height:26px;"></div>
<div class="sep" style="left:638px;top:805px;width:1px;height:26px;"></div>
<div class="sep" style="left:701px;top:805px;width:1px;height:26px;"></div>
<div class="sep" style="left:785px;top:805px;width:1px;height:26px;"></div>
<div class="sep" style="left:880px;top:805px;width:1px;height:26px;"></div>
<div style="left:640px;top:802px;width:58px;height:32px;background:#f4f8fd;border:1px solid #4aa3f3"></div>
<svg class="i" style="left:643px;top:809px" width="16" height="16" viewBox="0 0 16 16"><defs><radialGradient id="beg" cx="0.4" cy="0.3" r="0.8"><stop offset="0" stop-color="#e8653a"/><stop offset="1" stop-color="#b8280c"/></radialGradient></defs><circle cx="8" cy="8.6" r="7.4" fill="#8a8a8a" opacity="0.35"/><circle cx="7.6" cy="8" r="7.3" fill="url(#beg)"/><path d="M4.2 4.6L11 11.4M11 4.6L4.2 11.4" stroke="#fff" stroke-width="2.4"/></svg>
<span class="s" style="left:662px;top:812px;letter-spacing:-0.4px">Errors</span>
<div style="left:704px;top:802px;width:78px;height:32px;background:#f4f8fd;border:1px solid #4aa3f3"></div>
<svg class="i" style="left:707px;top:809px" width="16" height="16" viewBox="0 0 16 16"><defs><linearGradient id="bwg" x1="0" y1="0" x2="0" y2="1"><stop offset="0" stop-color="#fff68a"/><stop offset="1" stop-color="#f4d414"/></linearGradient></defs><path d="M8 0.8Q8.6 0.8 9 1.5L15.4 14Q15.8 15.4 14.6 15.4H1.4Q0.2 15.4 0.6 14L7 1.5Q7.4 0.8 8 0.8Z" fill="url(#bwg)" stroke="#b89a14" stroke-width="0.9"/><path d="M8 5V10.6" stroke="#111" stroke-width="1.9"/><circle cx="8" cy="13" r="1.1" fill="#111"/></svg>
<span class="s" style="left:726px;top:812px;">Warnings</span>
<div style="left:788px;top:802px;width:89px;height:32px;background:#f4f8fd;border:1px solid #4aa3f3"></div>
<svg class="i" style="left:791px;top:809px" width="16" height="16" viewBox="0 0 16 16"><defs><radialGradient id="bcg" cx="0.4" cy="0.3" r="0.8"><stop offset="0" stop-color="#4ac24a"/><stop offset="1" stop-color="#178a1c"/></radialGradient></defs><circle cx="8" cy="8.6" r="7.4" fill="#8a8a8a" opacity="0.35"/><circle cx="7.6" cy="8" r="7.3" fill="url(#bcg)"/><path d="M4.2 4.6L11 11.4M11 4.6L4.2 11.4" stroke="#fff" stroke-width="2.4"/></svg>
<span class="s" style="left:810px;top:812px;">Corrections</span>
<div style="left:883px;top:802px;width:80px;height:32px;background:#f4f8fd;border:1px solid #4aa3f3"></div>
<svg class="i" style="left:886px;top:809px" width="16" height="16" viewBox="0 0 16 16"><defs><radialGradient id="biga" cx="0.35" cy="0.25" r="0.85"><stop offset="0" stop-color="#ffffff"/><stop offset="0.55" stop-color="#d2e6fa"/><stop offset="1" stop-color="#9cc4ee"/></radialGradient></defs><path d="M10.23 13.47L9.00 16.70L5.37 13.47Z" fill="#a9cbee" stroke="#56709c" stroke-width="0.6"/><circle cx="7.8" cy="7.4" r="7.1" fill="url(#biga)" stroke="#bcd0e6" stroke-width="0.7"/><path d="M14.87 6.78A7.1 7.1 0 0 1 9.64 14.26" fill="none" stroke="#56709c" stroke-width="1" opacity="0.8"/><text x="6.05" y="11.28" font-family="Liberation Serif,serif" font-weight="bold" font-size="12.5" fill="#0f2a78">i</text></svg>
<span class="s" style="left:905px;top:812px;letter-spacing:-0.35px;margin-left:1px">Messages</span>
<div style="left:421px;top:836px;width:587px;height:1px;background:#828790"></div>
<div style="left:422px;top:981px;width:585px;height:16px;background:#f0f0f0"></div>
<div style="left:440px;top:981px;width:160px;height:16px;background:#cdcdcd"></div>
<svg class="i" style="left:422px;top:981px" width="17" height="16" viewBox="0 0 17 16"><path d="M10.5 4.5L7 8l3.5 3.5" stroke="#5a5a5a" stroke-width="1.9" fill="none"/></svg>
<svg class="i" style="left:989px;top:981px" width="17" height="16" viewBox="0 0 17 16"><path d="M6.5 4.5L10 8l-3.5 3.5" stroke="#5a5a5a" stroke-width="1.9" fill="none"/></svg>
<svg class="i" style="left:427px;top:838px" width="17" height="17" viewBox="0 0 17 17"><defs><radialGradient id="bigb" cx="0.35" cy="0.25" r="0.85"><stop offset="0" stop-color="#ffffff"/><stop offset="0.55" stop-color="#d2e6fa"/><stop offset="1" stop-color="#9cc4ee"/></radialGradient></defs><path d="M10.26 13.57L9.00 16.80L5.34 13.57Z" fill="#a9cbee" stroke="#56709c" stroke-width="0.6"/><circle cx="7.8" cy="7.4" r="7.2" fill="url(#bigb)" stroke="#bcd0e6" stroke-width="0.7"/><path d="M14.97 6.77A7.2 7.2 0 0 1 9.66 14.35" fill="none" stroke="#56709c" stroke-width="1" opacity="0.8"/><text x="5.98" y="11.43" font-family="Liberation Serif,serif" font-weight="bold" font-size="13" fill="#0f2a78">i</text></svg>
<svg class="i" style="left:427px;top:855px" width="17" height="17" viewBox="0 0 17 17"><defs><radialGradient id="bigb" cx="0.35" cy="0.25" r="0.85"><stop offset="0" stop-color="#ffffff"/><stop offset="0.55" stop-color="#d2e6fa"/><stop offset="1" stop-color="#9cc4ee"/></radialGradient></defs><path d="M10.26 13.57L9.00 16.80L5.34 13.57Z" fill="#a9cbee" stroke="#56709c" stroke-width="0.6"/><circle cx="7.8" cy="7.4" r="7.2" fill="url(#bigb)" stroke="#bcd0e6" stroke-width="0.7"/><path d="M14.97 6.77A7.2 7.2 0 0 1 9.66 14.35" fill="none" stroke="#56709c" stroke-width="1" opacity="0.8"/><text x="5.98" y="11.43" font-family="Liberation Serif,serif" font-weight="bold" font-size="13" fill="#0f2a78">i</text></svg>
<span class="b" style="left:450px;top:841px;font-size:12px;color:#0000ff;letter-spacing:0.1px">15:49:28 DVDLogic KITe UHD Authoring Suite version 1.4.0.1 was loaded.</span>
<span class="s" style="left:449px;top:859px;font-size:11px;letter-spacing:-0.1px;color:#111">15:49:29 Loaded project file: D:\DVDLogic\ProjectBD.bdProj</span>
<div style="left:1012px;top:778px;width:587px;height:221px;background:#fff;border:1px solid #9a9a9a;border-bottom-color:#828790"></div>
<div style="left:1013px;top:779px;width:585px;height:22px;background:#f0f0f6"></div>
<span class="t" style="left:1018px;top:784px;">Compilation</span>
<svg class="i" style="left:1561px;top:784px" width="10" height="12" viewBox="0 0 10 12"><path d="M2.5 2.5h5M3.5 2.5v4.5M6.5 2.5v4.5M7.5 2.5v4.5M1.5 7.5h7M4.5 8v3" stroke="#000" stroke-width="1" fill="none"/></svg>
<svg class="i" style="left:1582px;top:785px" width="10" height="10" viewBox="0 0 10 10"><path d="M1.7 1.7l6.6 6.6M8.3 1.7l-6.6 6.6" stroke="#000" stroke-width="2" fill="none"/></svg>
<div style="left:1013px;top:801px;width:585px;height:35px;background:linear-gradient(#fefefe,#fafafa 60%,#ececec)"></div>
<div class="grip" style="left:1016px;top:806px;width:2px;height:22px;"></div>
<svg class="i" style="left:1025px;top:806px" width="24" height="24" viewBox="0 0 24 24"><defs><linearGradient id="lcg" x1="0" y1="0" x2="1" y2="0"><stop offset="0" stop-color="#2a94cc"/><stop offset="0.5" stop-color="#2260a8"/><stop offset="1" stop-color="#1b2c92"/></linearGradient><linearGradient id="lcd" x1="0" y1="0" x2="1" y2="0"><stop offset="0" stop-color="#ffd76a"/><stop offset="0.5" stop-color="#fff2b0"/><stop offset="1" stop-color="#ffd058"/></linearGradient></defs><path d="M7.4 3.4H10.6V8H7.4Z" fill="#ffd98a" stroke="#f09a50" stroke-width="0.7"/><path d="M11.4 0.4H19.6L23.4 4.2V17.6H11.4Z" fill="url(#lcd)" stroke="#f08c44" stroke-width="0.9"/><path d="M13.2 3.8H17M13.2 7H21.6M13.2 10.2H21.6M13.2 13.6H21.6" stroke="#4a3c24" stroke-width="1.5"/><path d="M14 19.6H19" stroke="#f4a838" stroke-width="1.6"/><path d="M17.6 20.6H22.6" stroke="#1d3aa0" stroke-width="1.6"/><path d="M0.2 7Q7 8.6 14 7.6V22.6Q7 24.4 0.2 22.2Z" fill="url(#lcg)"/><path d="M14 12.4H16.8V15.6H14Z" fill="#14208a"/></svg>
<svg class="i" style="left:1057px;top:806px" width="24" height="24" viewBox="0 0 24 24"><path d="M4 1.4L7.4 1L14.2 13.4L12.2 15.6Q8 9.6 4 1.4Z" fill="#1b4478"/><path d="M20.2 1.4L16.8 1L10 13.4L12 15.6Q16.2 9.6 20.2 1.4Z" fill="#1b4478"/><ellipse cx="6.4" cy="20.2" rx="3.2" ry="2.6" fill="none" stroke="#1b4478" stroke-width="1.9"/><ellipse cx="17.8" cy="20.2" rx="3.2" ry="2.6" fill="none" stroke="#1b4478" stroke-width="1.9"/><path d="M8.6 18.4L12.4 13.8M15.6 18.4L11.8 13.8" stroke="#1b4478" stroke-width="2.4"/><circle cx="12.1" cy="14.2" r="0.7" fill="#f4f6fa"/></svg>
<svg class="i" style="left:1089px;top:806px" width="24" height="24" viewBox="0 0 24 24"><defs><linearGradient id="plgb" gradientUnits="userSpaceOnUse" x1="5" y1="0" x2="23" y2="0"><stop offset="0" stop-color="#5c0012"/><stop offset="0.45" stop-color="#a00808"/><stop offset="0.8" stop-color="#d02c0c"/><stop offset="1" stop-color="#e8600c"/></linearGradient></defs><path d="M17.31 21.40A11.1 11.1 0 1 1 20.85 4.77" fill="none" stroke="#b41a1a" stroke-width="1.6"/><path d="M23.09 10.06A11.1 11.1 0 0 1 19.53 19.85" fill="none" stroke="#c43a3a" stroke-width="0.9"/><path fill="url(#plgb)" d="M6.56 6.91L14.88 14.40L12.34 17.23L4.02 9.73Z"/><path fill="url(#plgb)" d="M4.78 15.29L11.18 7.09L14.18 9.43L7.77 17.63Z"/><path fill="url(#plgb)" d="M10.6 9.6Q16.6 5.8 23.2 6Q17.8 8.6 14 13.6Z"/><path fill="url(#plgb)" d="M11.6 14.6Q15 18.2 17.4 23.2Q19.8 17 15.2 10.4Z"/><circle cx="12.8" cy="12" r="2.2" fill="#a00a0a"/></svg>
<svg class="i" style="left:1121px;top:806px" width="24" height="24" viewBox="0 0 24 24"><defs><linearGradient id="llg" x1="0" y1="0" x2="1" y2="1"><stop offset="0" stop-color="#f0f1fa"/><stop offset="1" stop-color="#c6cade"/></linearGradient><linearGradient id="ldg" x1="0" y1="0" x2="1" y2="1"><stop offset="0" stop-color="#ff2a2a"/><stop offset="0.5" stop-color="#d40808"/><stop offset="1" stop-color="#f01818"/></linearGradient></defs><path d="M4.4 1.8H19.6Q21.2 1.8 21.2 3.4V20.2Q21.2 21.8 19.6 21.8H10.6L3 14.6V3.4Q3 1.8 4.4 1.8Z" fill="url(#llg)" stroke="#58628e" stroke-width="1.7" stroke-linejoin="round"/><path d="M6 5.2H18.4M6 9.4H18.4M6 13.6H18.4M11 18.4H18.4" stroke="#48527e" stroke-width="1.5"/><path d="M6.4 18L3.8 20.8" stroke="#3a4686" stroke-width="1.2"/><circle cx="3.6" cy="21" r="1.2" fill="#3a4686"/></svg>
<svg class="i" style="left:1159px;top:806px" width="24" height="24" viewBox="0 0 24 24"><path d="M3.6 1.6H20.6Q21.6 1.6 21.6 2.6V21.2Q21.6 22.2 20.6 22.2H8.6L2.8 16.6V2.6Q2.8 1.6 3.6 1.6Z" fill="#f3e9c8" stroke="#b4a684" stroke-width="0.9"/><path d="M10 2L22.4 12.4" stroke="#e21414" stroke-width="5"/><path d="M21.4 2L3.6 19.8" stroke="#e01010" stroke-width="5.2"/><path d="M19.6 5.2L6.4 18.4" stroke="#c00606" stroke-width="1.6" opacity="0.55"/></svg>
<svg class="i" style="left:1197px;top:806px" width="24" height="24" viewBox="0 0 24 24"><path d="M1 3.6H17.4V22.4H1Z" fill="#62a63e" stroke="#3f7a24" stroke-width="0.9"/><path d="M5.6 3.4V1.8H7.8L9.2 0.4L10.6 1.8H12.8V3.4Z" fill="#4f8f2e"/><path d="M3 5.6H15.6V20.6H3Z" fill="#fbfbf6"/><path d="M4.4 8H14M4.4 11H12M4.4 14H11M4.4 17H11" stroke="#1a1a1a" stroke-width="1.5"/><path d="M12.2 12H21.6L23.8 14.2V23H12.2Z" fill="#5653a4" stroke="#3c3a84" stroke-width="0.7"/><rect x="14.6" y="12.4" width="5.4" height="3.6" fill="#c9c8ea"/><circle cx="18" cy="19.4" r="2" fill="#dcdbf4" stroke="#3c3a84" stroke-width="0.7"/></svg>
<div class="sep" style="left:1152px;top:805px;width:1px;height:26px;"></div>
<div class="sep" style="left:1190px;top:805px;width:1px;height:26px;"></div>
<div class="sep" style="left:1229px;top:805px;width:1px;height:26px;"></div>
<div class="sep" style="left:1292px;top:805px;width:1px;height:26px;"></div>
<div class="sep" style="left:1376px;top:805px;width:1px;height:26px;"></div>
<div class="sep" style="left:1471px;top:805px;width:1px;height:26px;"></div>
<div style="left:1231px;top:802px;width:58px;height:32px;background:#f4f8fd;border:1px solid #4aa3f3"></div>
<svg class="i" style="left:1234px;top:809px" width="16" height="16" viewBox="0 0 16 16"><defs><radialGradient id="beg" cx="0.4" cy="0.3" r="0.8"><stop offset="0" stop-color="#e8653a"/><stop offset="1" stop-color="#b8280c"/></radialGradient></defs><circle cx="8" cy="8.6" r="7.4" fill="#8a8a8a" opacity="0.35"/><circle cx="7.6" cy="8" r="7.3" fill="url(#beg)"/><path d="M4.2 4.6L11 11.4M11 4.6L4.2 11.4" stroke="#fff" stroke-width="2.4"/></svg>
<span class="s" style="left:1253px;top:812px;letter-spacing:-0.4px">Errors</span>
<div style="left:1295px;top:802px;width:78px;height:32px;background:#f4f8fd;border:1px solid #4aa3f3"></div>
<svg class="i" style="left:1298px;top:809px" width="16" height="16" viewBox="0 0 16 16"><defs><linearGradient id="bwg" x1="0" y1="0" x2="0" y2="1"><stop offset="0" stop-color="#fff68a"/><stop offset="1" stop-color="#f4d414"/></linearGradient></defs><path d="M8 0.8Q8.6 0.8 9 1.5L15.4 14Q15.8 15.4 14.6 15.4H1.4Q0.2 15.4 0.6 14L7 1.5Q7.4 0.8 8 0.8Z" fill="url(#bwg)" stroke="#b89a14" stroke-width="0.9"/><path d="M8 5V10.6" stroke="#111" stroke-width="1.9"/><circle cx="8" cy="13" r="1.1" fill="#111"/></svg>
<span class="s" style="left:1317px;top:812px;">Warnings</span>
<div style="left:1379px;top:802px;width:89px;height:32px;background:#f4f8fd;border:1px solid #4aa3f3"></div>
<svg class="i" style="left:1382px;top:809px" width="16" height="16" viewBox="0 0 16 16"><defs><radialGradient id="bcg" cx="0.4" cy="0.3" r="0.8"><stop offset="0" stop-color="#4ac24a"/><stop offset="1" stop-color="#178a1c"/></radialGradient></defs><circle cx="8" cy="8.6" r="7.4" fill="#8a8a8a" opacity="0.35"/><circle cx="7.6" cy="8" r="7.3" fill="url(#bcg)"/><path d="M4.2 4.6L11 11.4M11 4.6L4.2 11.4" stroke="#fff" stroke-width="2.4"/></svg>
<span class="s" style="left:1401px;top:812px;">Corrections</span>
<div style="left:1474px;top:802px;width:80px;height:32px;background:#f4f8fd;border:1px solid #4aa3f3"></div>
<svg class="i" style="left:1477px;top:809px" width="16" height="16" viewBox="0 0 16 16"><defs><radialGradient id="biga" cx="0.35" cy="0.25" r="0.85"><stop offset="0" stop-color="#ffffff"/><stop offset="0.55" stop-color="#d2e6fa"/><stop offset="1" stop-color="#9cc4ee"/></radialGradient></defs><path d="M10.23 13.47L9.00 16.70L5.37 13.47Z" fill="#a9cbee" stroke="#56709c" stroke-width="0.6"/><circle cx="7.8" cy="7.4" r="7.1" fill="url(#biga)" stroke="#bcd0e6" stroke-width="0.7"/><path d="M14.87 6.78A7.1 7.1 0 0 1 9.64 14.26" fill="none" stroke="#56709c" stroke-width="1" opacity="0.8"/><text x="6.05" y="11.28" font-family="Liberation Serif,serif" font-weight="bold" font-size="12.5" fill="#0f2a78">i</text></svg>
<span class="s" style="left:1496px;top:812px;letter-spacing:-0.35px;margin-left:1px">Messages</span>
<div style="left:1012px;top:836px;width:587px;height:1px;background:#828790"></div>
<div style="left:1013px;top:981px;width:585px;height:16px;background:#f0f0f0"></div>
<div style="left:1031px;top:981px;width:160px;height:16px;background:#cdcdcd"></div>
<svg class="i" style="left:1013px;top:981px" width="17" height="16" viewBox="0 0 17 16"><path d="M10.5 4.5L7 8l3.5 3.5" stroke="#5a5a5a" stroke-width="1.9" fill="none"/></svg>
<svg class="i" style="left:1580px;top:981px" width="17" height="16" viewBox="0 0 17 16"><path d="M6.5 4.5L10 8l-3.5 3.5" stroke="#5a5a5a" stroke-width="1.9" fill="none"/></svg>
<div style="left:1008px;top:778px;width:4px;height:221px;background:#fafafa"></div>
</body></html>
